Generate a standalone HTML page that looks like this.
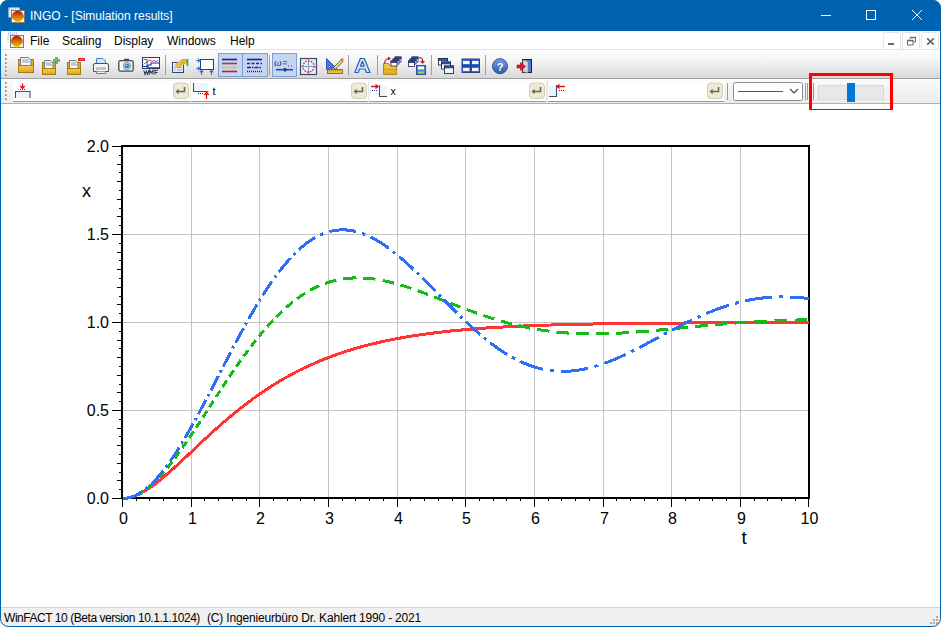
<!DOCTYPE html>
<html><head><meta charset="utf-8">
<style>
*{margin:0;padding:0;box-sizing:border-box}
html,body{width:941px;height:627px;overflow:hidden;background:#fff}
body{position:relative;font-family:"Liberation Sans",sans-serif}
.a{position:absolute}
.win{position:absolute;left:0;top:0;width:941px;height:627px;overflow:hidden;background:#fff}
.title{position:absolute;left:0;top:0;width:941px;height:31px;background:#0063b1}
.tt{position:absolute;color:#fff;font-size:12px;white-space:nowrap;line-height:14px}
.menu{position:absolute;top:31px;left:0;width:941px;height:19px;background:#fff}
.mi{position:absolute;top:34px;font-size:12px;line-height:14px;color:#000;white-space:nowrap}
.tb1{position:absolute;left:0;top:49px;width:941px;height:30px;background:linear-gradient(#fdfdfd,#f6f6f6 35%,#d8d8d8);border-top:1px solid #e4e4e4;border-bottom:1px solid #a0a0a0}
.tb2{position:absolute;left:0;top:79px;width:941px;height:25px;background:linear-gradient(#fafafa,#ececec);border-top:1px solid #fcfcfc;border-bottom:1px solid #b0b0b0}
.fld{position:absolute;top:81px;height:21px;background:#fff;border-bottom:1px solid #9a9a9a}
.ent{position:absolute;top:83px;width:16px;height:16px;border-radius:4px;background:#ebe6d2;border:1px solid #d8d2b8}
.sep{position:absolute;width:1px;background:#a8a8a8}
.status{position:absolute;left:0;top:607px;width:941px;height:20px;background:#f0f0f0;border-top:1px solid #d4d4d4}
.st{position:absolute;left:4px;top:611px;font-size:12px;line-height:14px;color:#000;white-space:nowrap;letter-spacing:-0.28px}
</style></head><body>
<div class="win">
<div class="title"></div>
<div class="tt" style="left:30px;top:8.6px">INGO - [Simulation results]</div>
<div class="menu"></div>
<div class="mi" style="left:30px">File</div>
<div class="mi" style="left:62px">Scaling</div>
<div class="mi" style="left:114px">Display</div>
<div class="mi" style="left:167px">Windows</div>
<div class="mi" style="left:230px">Help</div>
<div class="tb1"></div>
<div class="tb2"></div>
<div class="fld" style="left:13px;width:177px"></div>
<div class="fld" style="left:191px;width:177px"></div>
<div class="fld" style="left:369px;width:177px"></div>
<div class="fld" style="left:548px;width:176px"></div>
<div class="ent" style="left:173px"></div>
<div class="ent" style="left:351px"></div>
<div class="ent" style="left:529px"></div>
<div class="ent" style="left:707px"></div>
<div class="status"></div>
<svg class="a" style="left:920px;top:606px" width="21" height="21"><g fill="#acacac"><rect x="16" y="10" width="2" height="2"/><rect x="13" y="13" width="2" height="2"/><rect x="16" y="13" width="2" height="2"/><rect x="10" y="16" width="2" height="2"/><rect x="13" y="16" width="2" height="2"/><rect x="16" y="16" width="2" height="2"/></g></svg>
<div class="st" style="letter-spacing:-0.45px">WinFACT 10 (Beta version 10.1.1.1024)</div><div class="st" style="left:207px;letter-spacing:-0.18px">(C) Ingenieurbüro Dr. Kahlert 1990 - 2021</div>
<svg width="941" height="520" viewBox="0 104 941 520" style="position:absolute;left:0;top:104px">
<g shape-rendering="crispEdges">
<path d="M191.5,147V497 M259.5,147V497 M328.5,147V497 M397.5,147V497 M465.5,147V497 M534.5,147V497 M603.5,147V497 M671.5,147V497 M740.5,147V497 M123,410.5H808 M123,322.5H808 M123,234.5H808" stroke="#c4c4c4" stroke-width="1" fill="none"/>
<path d="M122.5,499V507 M191.5,499V507 M259.5,499V507 M328.5,499V507 M397.5,499V507 M465.5,499V507 M534.5,499V507 M603.5,499V507 M671.5,499V507 M740.5,499V507 M808.5,499V507 M136.5,499V501 M149.5,499V501 M163.5,499V501 M177.5,499V501 M204.5,499V501 M218.5,499V501 M232.5,499V501 M246.5,499V501 M273.5,499V501 M287.5,499V501 M300.5,499V501 M314.5,499V501 M342.5,499V501 M355.5,499V501 M369.5,499V501 M383.5,499V501 M410.5,499V501 M424.5,499V501 M438.5,499V501 M452.5,499V501 M479.5,499V501 M493.5,499V501 M506.5,499V501 M520.5,499V501 M548.5,499V501 M561.5,499V501 M575.5,499V501 M589.5,499V501 M616.5,499V501 M630.5,499V501 M644.5,499V501 M657.5,499V501 M685.5,499V501 M699.5,499V501 M712.5,499V501 M726.5,499V501 M754.5,499V501 M767.5,499V501 M781.5,499V501 M795.5,499V501 M112,498.5H121 M119,489.5H121 M117,480.5H121 M119,472.5H121 M117,463.5H121 M119,454.5H121 M117,445.5H121 M119,436.5H121 M117,428.5H121 M119,419.5H121 M112,410.5H121 M119,401.5H121 M117,392.5H121 M119,384.5H121 M117,375.5H121 M119,366.5H121 M117,357.5H121 M119,348.5H121 M117,340.5H121 M119,331.5H121 M112,322.5H121 M119,313.5H121 M117,304.5H121 M119,296.5H121 M117,287.5H121 M119,278.5H121 M117,269.5H121 M119,260.5H121 M117,252.5H121 M119,243.5H121 M112,234.5H121 M119,225.5H121 M117,216.5H121 M119,208.5H121 M117,199.5H121 M119,190.5H121 M117,181.5H121 M119,172.5H121 M117,164.5H121 M119,155.5H121 M112,146.5H121" stroke="#000" stroke-width="1" fill="none"/>
<rect x="122" y="146" width="687" height="352" fill="none" stroke="#000" stroke-width="2"/>
</g>
<path d="M122.5,498.5 123.9,498.5 125.2,498.4 126.6,498.2 128.0,498.0 129.4,497.7 130.7,497.3 132.1,496.9 133.5,496.5 134.9,496.0 136.2,495.4 137.6,494.8 139.0,494.2 140.3,493.5 141.7,492.8 143.1,492.0 144.5,491.2 145.8,490.4 147.2,489.5 148.6,488.6 150.0,487.7 151.3,486.7 152.7,485.7 154.1,484.7 155.5,483.7 156.8,482.6 158.2,481.5 159.6,480.4 160.9,479.3 162.3,478.2 163.7,477.0 165.1,475.9 166.4,474.7 167.8,473.5 169.2,472.3 170.6,471.1 171.9,469.8 173.3,468.6 174.7,467.4 176.0,466.1 177.4,464.8 178.8,463.6 180.2,462.3 181.5,461.0 182.9,459.7 184.3,458.5 185.7,457.2 187.0,455.9 188.4,454.6 189.8,453.3 191.2,452.0 192.5,450.7 193.9,449.4 195.3,448.1 196.6,446.8 198.0,445.5 199.4,444.2 200.8,443.0 202.1,441.7 203.5,440.4 204.9,439.1 206.3,437.9 207.6,436.6 209.0,435.3 210.4,434.1 211.7,432.8 213.1,431.6 214.5,430.3 215.9,429.1 217.2,427.9 218.6,426.7 220.0,425.5 221.4,424.2 222.7,423.0 224.1,421.9 225.5,420.7 226.8,419.5 228.2,418.3 229.6,417.2 231.0,416.0 232.3,414.9 233.7,413.8 235.1,412.6 236.5,411.5 237.8,410.4 239.2,409.3 240.6,408.2 242.0,407.1 243.3,406.1 244.7,405.0 246.1,404.0 247.4,402.9 248.8,401.9 250.2,400.9 251.6,399.8 252.9,398.8 254.3,397.8 255.7,396.9 257.1,395.9 258.4,394.9 259.8,394.0 261.2,393.0 262.5,392.1 263.9,391.1 265.3,390.2 266.7,389.3 268.0,388.4 269.4,387.5 270.8,386.6 272.2,385.8 273.5,384.9 274.9,384.1 276.3,383.2 277.6,382.4 279.0,381.5 280.4,380.7 281.8,379.9 283.1,379.1 284.5,378.3 285.9,377.6 287.3,376.8 288.6,376.0 290.0,375.3 291.4,374.5 292.8,373.8 294.1,373.1 295.5,372.3 296.9,371.6 298.2,370.9 299.6,370.2 301.0,369.6 302.4,368.9 303.7,368.2 305.1,367.6 306.5,366.9 307.9,366.3 309.2,365.6 310.6,365.0 312.0,364.4 313.3,363.8 314.7,363.2 316.1,362.6 317.5,362.0 318.8,361.4 320.2,360.8 321.6,360.3 323.0,359.7 324.3,359.2 325.7,358.6 327.1,358.1 328.5,357.6 329.8,357.0 331.2,356.5 332.6,356.0 333.9,355.5 335.3,355.0 336.7,354.5 338.1,354.0 339.4,353.6 340.8,353.1 342.2,352.6 343.6,352.2 344.9,351.7 346.3,351.3 347.7,350.8 349.0,350.4 350.4,350.0 351.8,349.6 353.2,349.2 354.5,348.7 355.9,348.3 357.3,347.9 358.7,347.6 360.0,347.2 361.4,346.8 362.8,346.4 364.1,346.0 365.5,345.7 366.9,345.3 368.3,345.0 369.6,344.6 371.0,344.3 372.4,343.9 373.8,343.6 375.1,343.3 376.5,343.0 377.9,342.6 379.3,342.3 380.6,342.0 382.0,341.7 383.4,341.4 384.7,341.1 386.1,340.8 387.5,340.5 388.9,340.2 390.2,340.0 391.6,339.7 393.0,339.4 394.4,339.1 395.7,338.9 397.1,338.6 398.5,338.4 399.8,338.1 401.2,337.9 402.6,337.6 404.0,337.4 405.3,337.1 406.7,336.9 408.1,336.7 409.5,336.4 410.8,336.2 412.2,336.0 413.6,335.8 414.9,335.6 416.3,335.4 417.7,335.2 419.1,335.0 420.4,334.8 421.8,334.6 423.2,334.4 424.6,334.2 425.9,334.0 427.3,333.8 428.7,333.6 430.1,333.4 431.4,333.3 432.8,333.1 434.2,332.9 435.5,332.7 436.9,332.6 438.3,332.4 439.7,332.2 441.0,332.1 442.4,331.9 443.8,331.8 445.2,331.6 446.5,331.5 447.9,331.3 449.3,331.2 450.6,331.0 452.0,330.9 453.4,330.8 454.8,330.6 456.1,330.5 457.5,330.4 458.9,330.2 460.3,330.1 461.6,330.0 463.0,329.9 464.4,329.7 465.8,329.6 467.1,329.5 468.5,329.4 469.9,329.3 471.2,329.2 472.6,329.0 474.0,328.9 475.4,328.8 476.7,328.7 478.1,328.6 479.5,328.5 480.9,328.4 482.2,328.3 483.6,328.2 485.0,328.1 486.3,328.0 487.7,327.9 489.1,327.9 490.5,327.8 491.8,327.7 493.2,327.6 494.6,327.5 496.0,327.4 497.3,327.3 498.7,327.3 500.1,327.2 501.4,327.1 502.8,327.0 504.2,326.9 505.6,326.9 506.9,326.8 508.3,326.7 509.7,326.7 511.1,326.6 512.4,326.5 513.8,326.4 515.2,326.4 516.6,326.3 517.9,326.2 519.3,326.2 520.7,326.1 522.0,326.1 523.4,326.0 524.8,325.9 526.2,325.9 527.5,325.8 528.9,325.8 530.3,325.7 531.7,325.7 533.0,325.6 534.4,325.6 535.8,325.5 537.1,325.5 538.5,325.4 539.9,325.4 541.3,325.3 542.6,325.3 544.0,325.2 545.4,325.2 546.8,325.1 548.1,325.1 549.5,325.0 550.9,325.0 552.2,324.9 553.6,324.9 555.0,324.9 556.4,324.8 557.7,324.8 559.1,324.7 560.5,324.7 561.9,324.7 563.2,324.6 564.6,324.6 566.0,324.6 567.4,324.5 568.7,324.5 570.1,324.5 571.5,324.4 572.8,324.4 574.2,324.4 575.6,324.3 577.0,324.3 578.3,324.3 579.7,324.2 581.1,324.2 582.5,324.2 583.8,324.1 585.2,324.1 586.6,324.1 587.9,324.1 589.3,324.0 590.7,324.0 592.1,324.0 593.4,324.0 594.8,323.9 596.2,323.9 597.6,323.9 598.9,323.9 600.3,323.8 601.7,323.8 603.1,323.8 604.4,323.8 605.8,323.7 607.2,323.7 608.5,323.7 609.9,323.7 611.3,323.7 612.7,323.6 614.0,323.6 615.4,323.6 616.8,323.6 618.2,323.6 619.5,323.5 620.9,323.5 622.3,323.5 623.6,323.5 625.0,323.5 626.4,323.5 627.8,323.4 629.1,323.4 630.5,323.4 631.9,323.4 633.3,323.4 634.6,323.4 636.0,323.3 637.4,323.3 638.7,323.3 640.1,323.3 641.5,323.3 642.9,323.3 644.2,323.3 645.6,323.2 647.0,323.2 648.4,323.2 649.7,323.2 651.1,323.2 652.5,323.2 653.9,323.2 655.2,323.2 656.6,323.1 658.0,323.1 659.3,323.1 660.7,323.1 662.1,323.1 663.5,323.1 664.8,323.1 666.2,323.1 667.6,323.1 669.0,323.1 670.3,323.0 671.7,323.0 673.1,323.0 674.4,323.0 675.8,323.0 677.2,323.0 678.6,323.0 679.9,323.0 681.3,323.0 682.7,323.0 684.1,323.0 685.4,322.9 686.8,322.9 688.2,322.9 689.5,322.9 690.9,322.9 692.3,322.9 693.7,322.9 695.0,322.9 696.4,322.9 697.8,322.9 699.2,322.9 700.5,322.9 701.9,322.9 703.3,322.9 704.7,322.8 706.0,322.8 707.4,322.8 708.8,322.8 710.1,322.8 711.5,322.8 712.9,322.8 714.3,322.8 715.6,322.8 717.0,322.8 718.4,322.8 719.8,322.8 721.1,322.8 722.5,322.8 723.9,322.8 725.2,322.8 726.6,322.8 728.0,322.8 729.4,322.8 730.7,322.7 732.1,322.7 733.5,322.7 734.9,322.7 736.2,322.7 737.6,322.7 739.0,322.7 740.4,322.7 741.7,322.7 743.1,322.7 744.5,322.7 745.8,322.7 747.2,322.7 748.6,322.7 750.0,322.7 751.3,322.7 752.7,322.7 754.1,322.7 755.5,322.7 756.8,322.7 758.2,322.7 759.6,322.7 760.9,322.7 762.3,322.7 763.7,322.7 765.1,322.7 766.4,322.7 767.8,322.7 769.2,322.6 770.6,322.6 771.9,322.6 773.3,322.6 774.7,322.6 776.0,322.6 777.4,322.6 778.8,322.6 780.2,322.6 781.5,322.6 782.9,322.6 784.3,322.6 785.7,322.6 787.0,322.6 788.4,322.6 789.8,322.6 791.2,322.6 792.5,322.6 793.9,322.6 795.3,322.6 796.6,322.6 798.0,322.6 799.4,322.6 800.8,322.6 802.1,322.6 803.5,322.6 804.9,322.6 806.3,322.6 807.6,322.6 809.0,322.6" stroke="#ff3535" stroke-width="3" fill="none" stroke-linejoin="round" shape-rendering="crispEdges"/>
<path d="M122.5,498.5 122.8,498.5 123.0,498.5 123.2,498.5 123.5,498.5 123.8,498.5 124.0,498.5 124.2,498.4 124.5,498.4 124.8,498.4 125.0,498.4 125.2,498.4 125.5,498.3 125.8,498.3 126.0,498.3 126.2,498.2 126.5,498.2 126.8,498.2 127.0,498.1 127.2,498.1 127.5,498.0 127.8,498.0 128.0,497.9 128.2,497.9 128.5,497.8 128.8,497.8 129.0,497.7 129.2,497.7 129.5,497.6 M135.8,495.4 136.0,495.3 136.2,495.2 136.5,495.0 136.8,494.9 137.0,494.8 137.2,494.7 137.5,494.5 137.8,494.4 138.0,494.3 138.2,494.2 138.5,494.0 138.8,493.9 139.0,493.7 139.2,493.6 139.5,493.5 139.8,493.3 140.0,493.2 140.2,493.0 140.5,492.9 140.8,492.7 141.0,492.6 141.2,492.4 141.5,492.3 141.8,492.1 142.0,492.0 142.2,491.8 142.5,491.6 142.8,491.5 143.0,491.3 143.2,491.1 143.5,491.0 143.8,490.8 144.0,490.6 144.2,490.4 M148.6,487.1 148.8,486.9 149.1,486.7 149.3,486.5 149.6,486.3 149.8,486.1 150.1,485.9 150.3,485.7 150.6,485.5 150.8,485.2 151.1,485.0 151.3,484.8 151.6,484.6 151.8,484.3 152.1,484.1 152.3,483.9 152.6,483.7 152.8,483.4 153.1,483.2 153.3,483.0 153.6,482.7 153.8,482.5 154.1,482.3 154.3,482.0 154.6,481.8 154.8,481.5 155.0,481.4 M158.6,477.8 158.8,477.5 159.1,477.2 159.3,477.0 159.6,476.7 159.8,476.4 160.1,476.2 160.3,475.9 160.6,475.6 160.8,475.3 161.1,475.1 161.3,474.8 161.6,474.5 161.8,474.2 162.1,474.0 162.3,473.7 162.6,473.4 162.8,473.1 163.1,472.8 163.3,472.5 163.6,472.3 163.8,472.0 164.1,471.7 M167.1,468.1 167.4,467.8 167.6,467.5 167.9,467.1 168.1,466.8 168.4,466.5 168.6,466.2 168.9,465.9 169.1,465.6 169.4,465.3 169.6,465.0 169.9,464.7 170.1,464.4 170.4,464.0 170.6,463.7 170.9,463.4 171.1,463.1 171.4,462.8 171.6,462.4 171.9,462.1 172.1,461.8 M174.9,458.1 175.2,457.8 175.4,457.5 175.7,457.1 175.9,456.8 176.2,456.5 176.4,456.1 176.7,455.8 176.9,455.4 177.2,455.1 177.4,454.8 177.7,454.4 177.9,454.1 178.2,453.7 178.4,453.4 178.7,453.1 178.9,452.7 179.2,452.4 179.4,452.0 179.6,451.9 M182.3,448.0 182.6,447.6 182.8,447.3 183.1,446.9 183.3,446.6 183.6,446.2 183.8,445.9 184.1,445.5 184.3,445.2 184.6,444.8 184.8,444.4 185.1,444.1 185.3,443.7 185.6,443.4 185.8,443.0 186.1,442.6 186.3,442.3 186.6,441.9 186.7,441.7 M189.3,437.9 189.6,437.5 189.8,437.1 190.1,436.8 190.3,436.4 190.6,436.0 190.8,435.7 191.1,435.3 191.3,434.9 191.6,434.5 191.8,434.2 192.1,433.8 192.3,433.4 192.6,433.0 192.8,432.7 193.1,432.3 193.3,431.9 193.6,431.5 M196.1,427.8 196.3,427.4 196.6,427.0 196.8,426.6 197.1,426.3 197.3,425.9 197.6,425.5 197.8,425.1 198.1,424.7 198.3,424.4 198.6,424.0 198.8,423.6 199.1,423.2 199.3,422.8 199.6,422.4 199.8,422.1 200.1,421.7 200.2,421.4 M202.8,417.6 203.0,417.2 203.2,416.8 203.5,416.4 203.8,416.0 204.0,415.6 204.2,415.2 204.5,414.9 204.8,414.5 205.0,414.1 205.2,413.7 205.5,413.3 205.8,412.9 206.0,412.5 206.2,412.2 206.5,411.8 206.8,411.4 206.9,411.2 M209.4,407.3 209.6,406.9 209.9,406.6 210.1,406.2 210.4,405.8 210.6,405.4 210.9,405.0 211.1,404.6 211.4,404.2 211.6,403.9 211.9,403.5 212.1,403.1 212.4,402.7 212.6,402.3 212.9,401.9 213.1,401.5 213.4,401.1 213.5,401.0 M216.0,397.1 216.2,396.7 216.5,396.3 216.8,396.0 217.0,395.6 217.2,395.2 217.5,394.8 217.8,394.4 218.0,394.0 218.2,393.6 218.5,393.3 218.8,392.9 219.0,392.5 219.2,392.1 219.5,391.7 219.8,391.4 220.0,391.0 220.1,390.8 M222.6,387.0 222.9,386.6 223.1,386.2 223.4,385.8 223.6,385.5 223.9,385.1 224.1,384.7 224.4,384.3 224.6,383.9 224.9,383.6 225.1,383.2 225.4,382.8 225.6,382.4 225.9,382.1 226.1,381.7 226.4,381.3 226.6,380.9 226.9,380.6 M229.4,376.7 229.7,376.4 229.9,376.0 230.2,375.6 230.4,375.3 230.7,374.9 230.9,374.5 231.2,374.1 231.4,373.8 231.7,373.4 231.9,373.0 232.2,372.7 232.4,372.3 232.7,371.9 232.9,371.6 233.2,371.2 233.4,370.8 233.7,370.5 233.8,370.4 M236.4,366.6 236.6,366.2 236.9,365.9 237.1,365.5 237.4,365.2 237.6,364.8 237.9,364.4 238.1,364.1 238.4,363.7 238.6,363.4 238.9,363.0 239.1,362.7 239.4,362.3 239.6,362.0 239.9,361.6 240.1,361.2 240.4,360.9 240.6,360.5 240.8,360.3 M243.5,356.5 243.8,356.2 244.0,355.8 244.2,355.5 244.5,355.2 244.8,354.8 245.0,354.5 245.2,354.1 245.5,353.8 245.8,353.5 246.0,353.1 246.2,352.8 246.5,352.4 246.8,352.1 247.0,351.8 247.2,351.4 247.5,351.1 247.8,350.8 248.0,350.4 248.1,350.2 M250.9,346.5 251.2,346.2 251.4,345.9 251.7,345.5 251.9,345.2 252.2,344.9 252.4,344.6 252.7,344.2 252.9,343.9 253.2,343.6 253.4,343.3 253.7,343.0 253.9,342.6 254.2,342.3 254.4,342.0 254.7,341.7 254.9,341.4 255.2,341.1 255.4,340.7 255.7,340.4 255.8,340.3 M258.8,336.5 259.1,336.2 259.3,335.9 259.6,335.6 259.8,335.3 260.1,335.0 260.3,334.7 260.6,334.4 260.8,334.1 261.1,333.8 261.3,333.5 261.6,333.2 261.8,332.9 262.1,332.6 262.3,332.3 262.6,332.0 262.8,331.7 263.1,331.4 263.3,331.1 263.6,330.8 263.8,330.6 263.9,330.4 M267.1,326.8 267.4,326.5 267.6,326.2 267.9,325.9 268.1,325.6 268.4,325.4 268.6,325.1 268.9,324.8 269.1,324.5 269.4,324.3 269.6,324.0 269.9,323.7 270.1,323.4 270.4,323.2 270.6,322.9 270.9,322.6 271.1,322.3 271.4,322.1 271.6,321.8 271.9,321.5 272.1,321.3 272.4,321.0 272.6,320.7 272.7,320.7 M276.2,317.1 276.4,316.8 276.7,316.5 276.9,316.3 277.2,316.0 277.4,315.8 277.7,315.5 277.9,315.3 278.2,315.1 278.4,314.8 278.7,314.6 278.9,314.3 279.2,314.1 279.4,313.8 279.7,313.6 279.9,313.3 280.2,313.1 280.4,312.9 280.7,312.6 280.9,312.4 281.2,312.2 281.4,311.9 281.7,311.7 281.9,311.4 282.2,311.2 282.2,311.2 M286.1,307.7 286.3,307.5 286.6,307.3 286.8,307.0 287.1,306.8 287.3,306.6 287.6,306.4 287.8,306.2 288.1,306.0 288.3,305.7 288.6,305.5 288.8,305.3 289.1,305.1 289.3,304.9 289.6,304.7 289.8,304.5 290.1,304.3 290.3,304.1 290.6,303.9 290.8,303.7 291.1,303.5 291.3,303.2 291.6,303.0 291.8,302.8 292.1,302.6 292.3,302.4 292.6,302.2 292.8,302.0 292.9,302.0 M297.2,298.7 297.4,298.5 297.7,298.3 297.9,298.2 298.2,298.0 298.4,297.8 298.7,297.6 298.9,297.5 299.2,297.3 299.4,297.1 299.7,296.9 299.9,296.8 300.2,296.6 300.4,296.4 300.7,296.2 300.9,296.1 301.2,295.9 301.4,295.7 301.7,295.6 301.9,295.4 302.2,295.2 302.4,295.1 302.7,294.9 302.9,294.7 303.2,294.6 303.4,294.4 303.7,294.2 303.9,294.1 304.2,293.9 304.4,293.8 304.7,293.6 304.9,293.4 305.0,293.4 M310.1,290.4 310.3,290.3 310.6,290.1 310.8,290.0 311.1,289.9 311.3,289.7 311.6,289.6 311.8,289.5 312.1,289.3 312.3,289.2 312.6,289.1 312.8,288.9 313.1,288.8 313.3,288.7 313.6,288.5 313.8,288.4 314.1,288.3 314.3,288.2 314.6,288.0 314.8,287.9 315.1,287.8 315.3,287.7 315.6,287.5 315.8,287.4 316.1,287.3 316.3,287.2 316.6,287.1 316.8,286.9 317.1,286.8 317.3,286.7 317.6,286.6 317.8,286.5 318.1,286.4 318.3,286.3 318.6,286.1 318.8,286.0 319.1,285.9 319.2,285.8 M325.2,283.4 325.5,283.4 325.8,283.3 326.0,283.2 326.2,283.1 326.5,283.0 326.8,282.9 327.0,282.8 327.2,282.7 327.5,282.7 327.8,282.6 328.0,282.5 328.2,282.4 328.5,282.3 328.8,282.3 329.0,282.2 329.2,282.1 329.5,282.0 329.8,281.9 330.0,281.9 330.2,281.8 330.5,281.7 330.8,281.6 331.0,281.6 331.2,281.5 331.5,281.4 331.8,281.4 332.0,281.3 332.2,281.2 332.5,281.1 332.8,281.1 333.0,281.0 333.2,280.9 333.5,280.9 333.8,280.8 334.0,280.8 334.2,280.7 334.5,280.6 334.8,280.6 335.0,280.5 335.2,280.4 335.5,280.4 335.8,280.3 336.0,280.3 336.2,280.2 M343.3,278.9 343.6,278.8 343.8,278.8 344.1,278.8 344.3,278.7 344.6,278.7 344.8,278.7 345.1,278.6 345.3,278.6 345.6,278.6 345.8,278.5 346.1,278.5 346.3,278.5 346.6,278.5 346.8,278.4 347.1,278.4 347.3,278.4 347.6,278.3 347.8,278.3 348.1,278.3 348.3,278.3 348.6,278.2 348.8,278.2 349.1,278.2 349.3,278.2 349.6,278.2 349.8,278.1 350.1,278.1 350.3,278.1 350.6,278.1 350.8,278.1 351.1,278.0 351.3,278.0 351.6,278.0 351.8,278.0 352.1,278.0 352.3,278.0 352.6,278.0 352.8,277.9 353.1,277.9 353.3,277.9 353.6,277.9 353.8,277.9 354.1,277.9 354.3,277.9 354.6,277.9 354.8,277.9 355.1,277.9 355.3,277.9 355.6,277.9 355.6,277.8 M363.1,278.0 363.4,278.0 363.6,278.0 363.9,278.0 364.1,278.0 364.4,278.0 364.6,278.0 364.9,278.1 365.1,278.1 365.4,278.1 365.6,278.1 365.9,278.1 366.1,278.1 366.4,278.2 366.6,278.2 366.9,278.2 367.1,278.2 367.4,278.2 367.6,278.3 367.9,278.3 368.1,278.3 368.4,278.3 368.6,278.4 368.9,278.4 369.1,278.4 369.4,278.4 369.6,278.5 369.9,278.5 370.1,278.5 370.4,278.5 370.6,278.6 370.9,278.6 371.1,278.6 371.4,278.7 371.6,278.7 371.9,278.7 372.1,278.7 372.4,278.8 372.6,278.8 372.9,278.8 373.1,278.9 373.4,278.9 373.6,278.9 373.9,279.0 374.1,279.0 374.4,279.0 374.6,279.1 374.9,279.1 375.1,279.1 375.4,279.2 375.4,279.2 M382.6,280.4 382.8,280.5 383.1,280.5 383.3,280.6 383.6,280.6 383.8,280.7 384.1,280.7 384.3,280.8 384.6,280.9 384.8,280.9 385.1,281.0 385.3,281.0 385.6,281.1 385.8,281.1 386.1,281.2 386.3,281.2 386.6,281.3 386.8,281.3 387.1,281.4 387.3,281.5 387.6,281.5 387.8,281.6 388.1,281.6 388.3,281.7 388.6,281.8 388.8,281.8 389.1,281.9 389.3,281.9 389.6,282.0 389.8,282.1 390.1,282.1 390.3,282.2 390.6,282.2 390.8,282.3 391.1,282.4 391.3,282.4 391.6,282.5 391.8,282.6 392.1,282.6 392.3,282.7 392.6,282.7 392.8,282.8 393.1,282.9 393.3,282.9 393.6,283.0 393.8,283.1 394.0,283.1 M400.6,285.0 400.9,285.1 401.1,285.2 401.4,285.2 401.6,285.3 401.9,285.4 402.1,285.5 402.4,285.5 402.6,285.6 402.9,285.7 403.1,285.8 403.4,285.8 403.6,285.9 403.9,286.0 404.1,286.1 404.4,286.2 404.6,286.2 404.9,286.3 405.1,286.4 405.4,286.5 405.6,286.6 405.9,286.6 406.1,286.7 406.4,286.8 406.6,286.9 406.9,287.0 407.1,287.0 407.4,287.1 407.6,287.2 407.9,287.3 408.1,287.4 408.4,287.4 408.6,287.5 408.9,287.6 409.1,287.7 409.4,287.8 409.6,287.9 409.9,287.9 410.1,288.0 410.4,288.1 410.6,288.2 410.9,288.3 411.1,288.4 411.4,288.5 M417.7,290.7 417.9,290.8 418.2,290.8 418.4,290.9 418.7,291.0 418.9,291.1 419.2,291.2 419.4,291.3 419.7,291.4 419.9,291.5 420.2,291.6 420.4,291.7 420.7,291.8 420.9,291.8 421.2,291.9 421.4,292.0 421.7,292.1 421.9,292.2 422.2,292.3 422.4,292.4 422.7,292.5 422.9,292.6 423.2,292.7 423.4,292.8 423.7,292.9 423.9,293.0 424.2,293.0 424.4,293.1 424.7,293.2 424.9,293.3 425.2,293.4 425.4,293.5 425.7,293.6 425.9,293.7 426.2,293.8 426.4,293.9 426.7,294.0 426.9,294.1 427.2,294.2 427.4,294.3 427.7,294.4 427.9,294.5 428.0,294.5 M434.1,296.8 434.4,296.9 434.6,297.0 434.9,297.1 435.1,297.2 435.4,297.3 435.6,297.4 435.9,297.5 436.1,297.6 436.4,297.7 436.6,297.8 436.9,297.9 437.1,298.0 437.4,298.1 437.6,298.2 437.9,298.3 438.1,298.4 438.4,298.5 438.6,298.6 438.9,298.7 439.1,298.8 439.4,298.9 439.6,299.0 439.9,299.1 440.1,299.2 440.4,299.3 440.6,299.4 440.9,299.5 441.1,299.6 441.4,299.7 441.6,299.8 441.9,299.9 442.1,300.0 442.4,300.1 442.6,300.2 442.9,300.3 443.1,300.4 443.4,300.5 443.6,300.5 443.9,300.6 444.1,300.7 444.2,300.8 M450.3,303.2 450.6,303.3 450.8,303.4 451.1,303.5 451.3,303.6 451.6,303.7 451.8,303.8 452.1,303.9 452.3,304.0 452.6,304.0 452.8,304.1 453.1,304.2 453.3,304.3 453.6,304.4 453.8,304.5 454.1,304.6 454.3,304.7 454.6,304.8 454.8,304.9 455.1,305.0 455.3,305.1 455.6,305.2 455.8,305.3 456.1,305.4 456.3,305.5 456.6,305.6 456.8,305.7 457.1,305.8 457.3,305.9 457.6,306.0 457.8,306.1 458.1,306.2 458.3,306.3 458.6,306.4 458.8,306.5 459.1,306.6 459.3,306.7 459.6,306.8 459.8,306.9 460.1,307.0 460.3,307.0 460.5,307.1 M466.6,309.4 466.9,309.5 467.1,309.6 467.4,309.7 467.6,309.8 467.9,309.9 468.1,310.0 468.4,310.1 468.6,310.2 468.9,310.3 469.1,310.4 469.4,310.5 469.6,310.6 469.9,310.6 470.1,310.7 470.4,310.8 470.6,310.9 470.9,311.0 471.1,311.1 471.4,311.2 471.6,311.3 471.9,311.4 472.1,311.5 472.4,311.6 472.6,311.6 472.9,311.7 473.1,311.8 473.4,311.9 473.6,312.0 473.9,312.1 474.1,312.2 474.4,312.3 474.6,312.4 474.9,312.5 475.1,312.6 475.4,312.6 475.6,312.7 475.9,312.8 476.1,312.9 476.4,313.0 476.6,313.1 476.9,313.2 477.0,313.2 M483.3,315.4 483.6,315.5 483.8,315.6 484.1,315.7 484.3,315.8 484.6,315.8 484.8,315.9 485.1,316.0 485.3,316.1 485.6,316.2 485.8,316.3 486.1,316.3 486.3,316.4 486.6,316.5 486.8,316.6 487.1,316.7 487.3,316.8 487.6,316.8 487.8,316.9 488.1,317.0 488.3,317.1 488.6,317.2 488.8,317.2 489.1,317.3 489.3,317.4 489.6,317.5 489.8,317.6 490.1,317.6 490.3,317.7 490.6,317.8 490.8,317.9 491.1,318.0 491.3,318.1 491.6,318.1 491.8,318.2 492.1,318.3 492.3,318.4 492.6,318.4 492.8,318.5 493.1,318.6 493.3,318.7 493.6,318.8 493.8,318.8 494.0,318.9 M500.6,320.9 500.8,320.9 501.1,321.0 501.3,321.1 501.6,321.2 501.8,321.2 502.1,321.3 502.3,321.4 502.6,321.5 502.8,321.5 503.1,321.6 503.3,321.7 503.6,321.7 503.8,321.8 504.1,321.9 504.3,321.9 504.6,322.0 504.8,322.1 505.1,322.2 505.3,322.2 505.6,322.3 505.8,322.4 506.1,322.4 506.3,322.5 506.6,322.6 506.8,322.6 507.1,322.7 507.3,322.8 507.6,322.8 507.8,322.9 508.1,323.0 508.3,323.0 508.6,323.1 508.8,323.2 509.1,323.2 509.3,323.3 509.6,323.4 509.8,323.4 510.1,323.5 510.3,323.6 510.6,323.6 510.8,323.7 511.1,323.8 511.3,323.8 511.6,323.9 511.7,323.9 M518.5,325.6 518.8,325.7 519.0,325.7 519.2,325.8 519.5,325.8 519.8,325.9 520.0,325.9 520.2,326.0 520.5,326.1 520.8,326.1 521.0,326.2 521.2,326.2 521.5,326.3 521.8,326.3 522.0,326.4 522.2,326.5 522.5,326.5 522.8,326.6 523.0,326.6 523.2,326.7 523.5,326.7 523.8,326.8 524.0,326.8 524.2,326.9 524.5,326.9 524.8,327.0 525.0,327.0 525.2,327.1 525.5,327.2 525.8,327.2 526.0,327.3 526.2,327.3 526.5,327.4 526.8,327.4 527.0,327.5 527.2,327.5 527.5,327.6 527.8,327.6 528.0,327.7 528.2,327.7 528.5,327.8 528.8,327.8 529.0,327.9 529.2,327.9 529.5,328.0 529.8,328.0 530.0,328.1 530.1,328.1 M537.2,329.4 537.5,329.4 537.8,329.5 538.0,329.5 538.2,329.5 538.5,329.6 538.8,329.6 539.0,329.7 539.2,329.7 539.5,329.8 539.8,329.8 540.0,329.8 540.2,329.9 540.5,329.9 540.8,330.0 541.0,330.0 541.2,330.0 541.5,330.1 541.8,330.1 542.0,330.1 542.2,330.2 542.5,330.2 542.8,330.3 543.0,330.3 543.2,330.3 543.5,330.4 543.8,330.4 544.0,330.4 544.2,330.5 544.5,330.5 544.8,330.6 545.0,330.6 545.2,330.6 545.5,330.7 545.8,330.7 546.0,330.7 546.2,330.8 546.5,330.8 546.8,330.8 547.0,330.9 547.2,330.9 547.5,330.9 547.8,331.0 548.0,331.0 548.2,331.0 548.5,331.1 548.8,331.1 549.0,331.1 549.2,331.2 549.3,331.2 M556.6,332.0 556.9,332.1 557.1,332.1 557.4,332.1 557.6,332.1 557.9,332.2 558.1,332.2 558.4,332.2 558.6,332.2 558.9,332.3 559.1,332.3 559.4,332.3 559.6,332.3 559.9,332.3 560.1,332.4 560.4,332.4 560.6,332.4 560.9,332.4 561.1,332.5 561.4,332.5 561.6,332.5 561.9,332.5 562.1,332.6 562.4,332.6 562.6,332.6 562.9,332.6 563.1,332.6 563.4,332.7 563.6,332.7 563.9,332.7 564.1,332.7 564.4,332.7 564.6,332.8 564.9,332.8 565.1,332.8 565.4,332.8 565.6,332.8 565.9,332.9 566.1,332.9 566.4,332.9 566.6,332.9 566.9,332.9 567.1,332.9 567.4,333.0 567.6,333.0 567.9,333.0 568.1,333.0 568.4,333.0 568.6,333.1 568.9,333.1 569.0,333.1 M576.4,333.5 576.7,333.5 576.9,333.5 577.2,333.5 577.4,333.5 577.7,333.5 577.9,333.5 578.2,333.6 578.4,333.6 578.7,333.6 578.9,333.6 579.2,333.6 579.4,333.6 579.7,333.6 579.9,333.6 580.2,333.6 580.4,333.6 580.7,333.6 580.9,333.7 581.2,333.7 581.4,333.7 581.7,333.7 581.9,333.7 582.2,333.7 582.4,333.7 582.7,333.7 582.9,333.7 583.2,333.7 583.4,333.7 583.7,333.7 583.9,333.7 584.2,333.7 584.4,333.7 584.7,333.8 584.9,333.8 585.2,333.8 585.4,333.8 585.7,333.8 585.9,333.8 586.2,333.8 586.4,333.8 586.7,333.8 586.9,333.8 587.2,333.8 587.4,333.8 587.7,333.8 587.9,333.8 588.2,333.8 588.4,333.8 588.7,333.8 588.9,333.8 M596.4,333.8 596.7,333.8 596.9,333.8 597.2,333.8 597.4,333.8 597.7,333.8 597.9,333.8 598.2,333.8 598.4,333.8 598.7,333.8 598.9,333.8 599.2,333.8 599.4,333.8 599.7,333.8 599.9,333.8 600.2,333.8 600.4,333.8 600.7,333.8 600.9,333.8 601.2,333.8 601.4,333.8 601.7,333.8 601.9,333.7 602.2,333.7 602.4,333.7 602.7,333.7 602.9,333.7 603.2,333.7 603.4,333.7 603.7,333.7 603.9,333.7 604.2,333.7 604.4,333.7 604.7,333.7 604.9,333.7 605.2,333.7 605.4,333.7 605.7,333.7 605.9,333.7 606.2,333.6 606.4,333.6 606.7,333.6 606.9,333.6 607.2,333.6 607.4,333.6 607.7,333.6 607.9,333.6 608.2,333.6 608.4,333.6 608.7,333.6 608.9,333.6 M616.4,333.2 616.6,333.2 616.9,333.2 617.1,333.2 617.4,333.2 617.6,333.2 617.9,333.2 618.1,333.2 618.4,333.2 618.6,333.1 618.9,333.1 619.1,333.1 619.4,333.1 619.6,333.1 619.9,333.1 620.1,333.1 620.4,333.0 620.6,333.0 620.9,333.0 621.1,333.0 621.4,333.0 621.6,333.0 621.9,333.0 622.1,332.9 622.4,332.9 622.6,332.9 622.9,332.9 623.1,332.9 623.4,332.9 623.6,332.9 623.9,332.8 624.1,332.8 624.4,332.8 624.6,332.8 624.9,332.8 625.1,332.8 625.4,332.8 625.6,332.7 625.9,332.7 626.1,332.7 626.4,332.7 626.6,332.7 626.9,332.7 627.1,332.6 627.4,332.6 627.6,332.6 627.9,332.6 628.1,332.6 628.4,332.6 628.6,332.5 628.8,332.5 M636.2,332.0 636.5,332.0 636.8,332.0 637.0,331.9 637.2,331.9 637.5,331.9 637.8,331.9 638.0,331.9 638.2,331.8 638.5,331.8 638.8,331.8 639.0,331.8 639.2,331.8 639.5,331.7 639.8,331.7 640.0,331.7 640.2,331.7 640.5,331.7 640.8,331.6 641.0,331.6 641.2,331.6 641.5,331.6 641.8,331.6 642.0,331.5 642.2,331.5 642.5,331.5 642.8,331.5 643.0,331.5 643.2,331.4 643.5,331.4 643.8,331.4 644.0,331.4 644.2,331.4 644.5,331.3 644.8,331.3 645.0,331.3 645.2,331.3 645.5,331.2 645.8,331.2 646.0,331.2 646.2,331.2 646.5,331.2 646.8,331.1 647.0,331.1 647.2,331.1 647.5,331.1 647.8,331.0 648.0,331.0 648.2,331.0 648.5,331.0 648.6,331.0 M656.0,330.3 656.2,330.3 656.5,330.3 656.8,330.2 657.0,330.2 657.2,330.2 657.5,330.2 657.8,330.1 658.0,330.1 658.2,330.1 658.5,330.1 658.8,330.0 659.0,330.0 659.2,330.0 659.5,330.0 659.8,330.0 660.0,329.9 660.2,329.9 660.5,329.9 660.8,329.9 661.0,329.8 661.2,329.8 661.5,329.8 661.8,329.8 662.0,329.7 662.2,329.7 662.5,329.7 662.8,329.7 663.0,329.6 663.2,329.6 663.5,329.6 663.8,329.6 664.0,329.5 664.2,329.5 664.5,329.5 664.8,329.5 665.0,329.4 665.2,329.4 665.5,329.4 665.8,329.4 666.0,329.4 666.2,329.3 666.5,329.3 666.8,329.3 667.0,329.3 667.2,329.2 667.5,329.2 667.8,329.2 668.0,329.2 668.2,329.1 668.3,329.1 M675.7,328.4 675.9,328.4 676.2,328.3 676.4,328.3 676.7,328.3 676.9,328.3 677.2,328.2 677.4,328.2 677.7,328.2 677.9,328.2 678.2,328.1 678.4,328.1 678.7,328.1 678.9,328.1 679.2,328.0 679.4,328.0 679.7,328.0 679.9,328.0 680.2,327.9 680.4,327.9 680.7,327.9 680.9,327.9 681.2,327.8 681.4,327.8 681.7,327.8 681.9,327.8 682.2,327.7 682.4,327.7 682.7,327.7 682.9,327.7 683.2,327.6 683.4,327.6 683.7,327.6 683.9,327.6 684.2,327.5 684.4,327.5 684.7,327.5 684.9,327.5 685.2,327.4 685.4,327.4 685.7,327.4 685.9,327.4 686.2,327.4 686.4,327.3 686.7,327.3 686.9,327.3 687.2,327.3 687.4,327.2 687.7,327.2 687.9,327.2 688.0,327.2 M695.4,326.4 695.6,326.4 695.9,326.4 696.1,326.4 696.4,326.4 696.6,326.3 696.9,326.3 697.1,326.3 697.4,326.3 697.6,326.2 697.9,326.2 698.1,326.2 698.4,326.2 698.6,326.1 698.9,326.1 699.1,326.1 699.4,326.1 699.6,326.0 699.9,326.0 700.1,326.0 700.4,326.0 700.6,325.9 700.9,325.9 701.1,325.9 701.4,325.9 701.6,325.8 701.9,325.8 702.1,325.8 702.4,325.8 702.6,325.8 702.9,325.7 703.1,325.7 703.4,325.7 703.6,325.7 703.9,325.6 704.1,325.6 704.4,325.6 704.6,325.6 704.9,325.5 705.1,325.5 705.4,325.5 705.6,325.5 705.9,325.4 706.1,325.4 706.4,325.4 706.6,325.4 706.9,325.4 707.1,325.3 707.4,325.3 707.6,325.3 707.7,325.3 M715.1,324.6 715.3,324.6 715.6,324.6 715.8,324.5 716.1,324.5 716.3,324.5 716.6,324.5 716.8,324.5 717.1,324.4 717.3,324.4 717.6,324.4 717.8,324.4 718.1,324.3 718.3,324.3 718.6,324.3 718.8,324.3 719.1,324.3 719.3,324.2 719.6,324.2 719.8,324.2 720.1,324.2 720.3,324.2 720.6,324.1 720.8,324.1 721.1,324.1 721.3,324.1 721.6,324.0 721.8,324.0 722.1,324.0 722.3,324.0 722.6,324.0 722.8,323.9 723.1,323.9 723.3,323.9 723.6,323.9 723.8,323.9 724.1,323.8 724.3,323.8 724.6,323.8 724.8,323.8 725.1,323.8 725.3,323.7 725.6,323.7 725.8,323.7 726.1,323.7 726.3,323.7 726.6,323.6 726.8,323.6 727.1,323.6 727.3,323.6 727.4,323.6 M734.8,323.0 735.1,323.0 735.3,323.0 735.6,322.9 735.8,322.9 736.1,322.9 736.3,322.9 736.6,322.9 736.8,322.8 737.1,322.8 737.3,322.8 737.6,322.8 737.8,322.8 738.1,322.8 738.3,322.7 738.6,322.7 738.8,322.7 739.1,322.7 739.3,322.7 739.6,322.6 739.8,322.6 740.1,322.6 740.3,322.6 740.6,322.6 740.8,322.6 741.1,322.5 741.3,322.5 741.6,322.5 741.8,322.5 742.1,322.5 742.3,322.5 742.6,322.4 742.8,322.4 743.1,322.4 743.3,322.4 743.6,322.4 743.8,322.3 744.1,322.3 744.3,322.3 744.6,322.3 744.8,322.3 745.1,322.3 745.3,322.2 745.6,322.2 745.8,322.2 746.1,322.2 746.3,322.2 746.6,322.2 746.8,322.1 747.1,322.1 747.2,322.1 M754.7,321.7 754.9,321.6 755.2,321.6 755.4,321.6 755.7,321.6 755.9,321.6 756.2,321.6 756.4,321.6 756.7,321.5 756.9,321.5 757.2,321.5 757.4,321.5 757.7,321.5 757.9,321.5 758.2,321.5 758.4,321.4 758.7,321.4 758.9,321.4 759.2,321.4 759.4,321.4 759.7,321.4 759.9,321.4 760.2,321.4 760.4,321.3 760.7,321.3 760.9,321.3 761.2,321.3 761.4,321.3 761.7,321.3 761.9,321.3 762.2,321.2 762.4,321.2 762.7,321.2 762.9,321.2 763.2,321.2 763.4,321.2 763.7,321.2 763.9,321.2 764.2,321.1 764.4,321.1 764.7,321.1 764.9,321.1 765.2,321.1 765.4,321.1 765.7,321.1 765.9,321.1 766.2,321.0 766.4,321.0 766.7,321.0 766.9,321.0 767.1,321.0 M774.6,320.7 774.9,320.7 775.1,320.6 775.4,320.6 775.6,320.6 775.9,320.6 776.1,320.6 776.4,320.6 776.6,320.6 776.9,320.6 777.1,320.6 777.4,320.6 777.6,320.5 777.9,320.5 778.1,320.5 778.4,320.5 778.6,320.5 778.9,320.5 779.1,320.5 779.4,320.5 779.6,320.5 779.9,320.5 780.1,320.5 780.4,320.4 780.6,320.4 780.9,320.4 781.1,320.4 781.4,320.4 781.6,320.4 781.9,320.4 782.1,320.4 782.4,320.4 782.6,320.4 782.9,320.4 783.1,320.3 783.4,320.3 783.6,320.3 783.9,320.3 784.1,320.3 784.4,320.3 784.6,320.3 784.9,320.3 785.1,320.3 785.4,320.3 785.6,320.3 785.9,320.3 786.1,320.2 786.4,320.2 786.6,320.2 786.9,320.2 787.1,320.2 M794.6,320.0 794.8,320.0 795.1,320.0 795.3,320.0 795.6,320.0 795.8,320.0 796.1,320.0 796.3,320.0 796.6,320.0 796.8,320.0 797.1,320.0 797.3,320.0 797.6,319.9 797.8,319.9 798.1,319.9 798.3,319.9 798.6,319.9 798.8,319.9 799.1,319.9 799.3,319.9 799.6,319.9 799.8,319.9 800.1,319.9 800.3,319.9 800.6,319.9 800.8,319.9 801.1,319.9 801.3,319.9 801.6,319.9 801.8,319.9 802.1,319.9 802.3,319.9 802.6,319.8 802.8,319.8 803.1,319.8 803.3,319.8 803.6,319.8 803.8,319.8 804.1,319.8 804.3,319.8 804.6,319.8 804.8,319.8 805.1,319.8 805.3,319.8 805.6,319.8 805.8,319.8 806.1,319.8 806.3,319.8 806.6,319.8 806.8,319.8 807.1,319.8" stroke="#14bb14" stroke-width="3" fill="none" shape-rendering="crispEdges"/>
<path d="M122.5,498.5 122.8,498.5 123.0,498.5 123.2,498.5 123.5,498.5 123.8,498.5 124.0,498.5 124.2,498.4 124.5,498.4 124.8,498.4 125.0,498.4 125.2,498.4 125.5,498.3 125.8,498.3 126.0,498.3 126.2,498.2 126.5,498.2 126.8,498.2 127.0,498.1 127.2,498.1 127.5,498.0 127.8,498.0 128.0,497.9 128.2,497.9 128.5,497.8 128.8,497.8 129.0,497.7 129.2,497.7 129.5,497.6 129.8,497.5 130.0,497.5 130.2,497.4 130.5,497.3 130.8,497.3 131.0,497.2 131.2,497.1 131.5,497.0 131.8,496.9 132.0,496.8 132.2,496.8 132.5,496.7 132.8,496.6 133.0,496.5 133.2,496.4 133.5,496.3 133.8,496.2 134.0,496.1 134.2,496.0 134.5,495.9 134.8,495.8 135.0,495.7 135.2,495.5 135.5,495.4 135.8,495.3 136.0,495.2 136.2,495.1 136.5,494.9 136.8,494.8 137.0,494.7 137.2,494.6 137.5,494.4 137.8,494.3 138.0,494.2 138.2,494.0 138.5,493.9 138.8,493.7 139.0,493.6 139.2,493.5 139.5,493.3 139.8,493.2 140.0,493.0 140.2,492.8 140.5,492.7 140.8,492.5 141.0,492.4 141.1,492.3 M145.4,489.2 145.6,489.0 145.9,488.8 146.1,488.6 146.4,488.4 146.6,488.2 146.9,488.0 147.1,487.8 147.4,487.6 147.6,487.4 M151.2,484.1 151.5,483.9 151.8,483.6 152.0,483.4 152.2,483.1 152.5,482.9 152.8,482.6 153.0,482.4 153.2,482.1 153.5,481.9 153.8,481.6 154.0,481.4 154.2,481.1 154.5,480.8 154.8,480.6 155.0,480.3 155.2,480.0 155.5,479.8 155.8,479.5 156.0,479.2 156.2,479.0 156.5,478.7 156.8,478.4 157.0,478.1 157.2,477.8 157.5,477.6 157.8,477.3 158.0,477.0 158.2,476.7 158.5,476.4 158.8,476.1 159.0,475.8 159.2,475.5 159.5,475.2 159.8,474.9 160.0,474.6 160.2,474.3 160.5,474.0 160.8,473.7 161.0,473.4 161.2,473.1 161.5,472.8 161.8,472.5 162.0,472.2 162.2,471.9 162.5,471.6 162.8,471.3 163.0,470.9 163.2,470.7 M165.9,467.1 166.2,466.8 166.4,466.4 166.7,466.1 166.9,465.8 167.2,465.4 167.4,465.2 M170.0,461.5 170.2,461.1 170.5,460.8 170.8,460.4 171.0,460.0 171.2,459.7 171.5,459.3 171.8,459.0 172.0,458.6 172.2,458.2 172.5,457.8 172.8,457.5 173.0,457.1 173.2,456.7 173.5,456.4 173.8,456.0 174.0,455.6 174.2,455.2 174.5,454.8 174.8,454.5 175.0,454.1 175.2,453.7 175.5,453.3 175.8,452.9 176.0,452.5 176.2,452.2 176.5,451.8 176.8,451.4 177.0,451.0 177.2,450.6 177.5,450.2 177.8,449.8 178.0,449.4 178.2,449.0 178.5,448.6 178.8,448.2 179.0,447.8 179.2,447.5 M181.5,443.8 181.8,443.4 182.0,442.9 182.2,442.5 182.5,442.1 182.8,441.7 M184.9,438.0 185.2,437.6 185.4,437.2 185.7,436.7 185.9,436.3 186.2,435.9 186.4,435.5 186.7,435.0 186.9,434.6 187.2,434.2 187.4,433.7 187.7,433.3 187.9,432.9 188.2,432.4 188.4,432.0 188.7,431.6 188.9,431.1 189.2,430.7 189.4,430.2 189.7,429.8 189.9,429.4 190.2,428.9 190.4,428.5 190.7,428.0 190.9,427.6 191.2,427.1 191.4,426.7 191.7,426.3 191.9,425.8 192.2,425.4 192.4,424.9 192.7,424.5 192.9,424.0 193.1,423.8 M195.1,420.2 195.3,419.7 195.6,419.3 195.8,418.8 196.1,418.3 196.2,418.0 M198.2,414.3 198.5,413.8 198.8,413.4 199.0,412.9 199.2,412.5 199.5,412.0 199.8,411.5 200.0,411.1 200.2,410.6 200.5,410.1 200.8,409.7 201.0,409.2 201.2,408.7 201.5,408.2 201.8,407.8 202.0,407.3 202.2,406.8 202.5,406.4 202.8,405.9 203.0,405.4 203.2,405.0 203.5,404.5 203.8,404.0 204.0,403.5 204.2,403.1 204.5,402.6 204.8,402.1 205.0,401.6 205.2,401.2 205.5,400.7 205.8,400.2 205.9,400.0 M207.8,396.3 208.1,395.8 208.3,395.3 208.6,394.8 208.8,394.4 208.9,394.2 M210.8,390.5 211.1,390.0 211.3,389.5 211.6,389.1 211.8,388.6 212.1,388.1 212.3,387.6 212.6,387.1 212.8,386.6 213.1,386.2 213.3,385.7 213.6,385.2 213.8,384.7 214.1,384.2 214.3,383.7 214.6,383.3 214.8,382.8 215.1,382.3 215.3,381.8 215.6,381.3 215.8,380.8 216.1,380.4 216.3,379.9 216.6,379.4 216.8,378.9 217.1,378.4 217.3,377.9 217.6,377.5 217.8,377.0 218.1,376.5 218.2,376.1 M220.2,372.4 220.4,371.9 220.7,371.4 220.9,370.9 221.2,370.4 221.2,370.3 M223.2,366.6 223.4,366.1 223.7,365.6 223.9,365.1 224.2,364.6 224.4,364.1 224.7,363.7 224.9,363.2 225.2,362.7 225.4,362.2 225.7,361.7 225.9,361.2 226.2,360.8 226.4,360.3 226.7,359.8 226.9,359.3 227.2,358.8 227.4,358.4 227.7,357.9 227.9,357.4 228.2,356.9 228.4,356.4 228.7,356.0 228.9,355.5 229.2,355.0 229.4,354.5 229.7,354.0 229.9,353.6 230.2,353.1 230.4,352.6 230.6,352.3 M232.6,348.4 232.9,348.0 233.1,347.5 233.4,347.0 233.6,346.5 233.7,346.4 M235.7,342.7 235.9,342.2 236.2,341.7 236.4,341.3 236.7,340.8 236.9,340.3 237.2,339.8 237.4,339.4 237.7,338.9 237.9,338.4 238.2,338.0 238.4,337.5 238.7,337.1 238.9,336.6 239.2,336.1 239.4,335.7 239.7,335.2 239.9,334.7 240.2,334.3 240.4,333.8 240.7,333.4 240.9,332.9 241.2,332.4 241.4,332.0 241.7,331.5 241.9,331.1 242.2,330.6 242.4,330.1 242.7,329.7 242.9,329.2 243.2,328.8 243.4,328.4 M245.4,324.7 245.7,324.3 245.9,323.8 246.2,323.4 246.4,322.9 246.6,322.6 M248.7,318.9 248.9,318.5 249.2,318.0 249.4,317.6 249.7,317.2 249.9,316.7 250.2,316.3 250.4,315.8 250.7,315.4 250.9,315.0 251.2,314.5 251.4,314.1 251.7,313.7 251.9,313.2 252.2,312.8 252.4,312.4 252.7,312.0 252.9,311.5 253.2,311.1 253.4,310.7 253.7,310.2 253.9,309.8 254.2,309.4 254.4,309.0 254.7,308.5 254.9,308.1 255.2,307.7 255.4,307.3 255.7,306.9 255.9,306.4 256.2,306.0 256.4,305.6 256.7,305.2 256.9,304.8 257.0,304.7 M259.2,301.0 259.5,300.6 259.8,300.1 260.0,299.7 260.2,299.3 260.5,298.9 M262.8,295.2 263.1,294.8 263.3,294.5 263.6,294.1 263.8,293.7 264.1,293.3 264.3,292.9 264.6,292.5 264.8,292.1 265.1,291.7 265.3,291.3 265.6,291.0 265.8,290.6 266.1,290.2 266.3,289.8 266.6,289.4 266.8,289.0 267.1,288.7 267.3,288.3 267.6,287.9 267.8,287.5 268.1,287.2 268.3,286.8 268.6,286.4 268.8,286.0 269.1,285.7 269.3,285.3 269.6,284.9 269.8,284.6 270.1,284.2 270.3,283.8 270.6,283.5 270.8,283.1 271.1,282.7 271.3,282.4 271.6,282.0 271.8,281.7 272.1,281.3 M274.7,277.6 274.9,277.3 275.2,276.9 275.4,276.6 275.7,276.2 275.9,275.9 276.1,275.6 M278.8,272.0 279.1,271.7 279.3,271.4 279.6,271.1 279.8,270.7 280.1,270.4 280.3,270.1 280.6,269.8 280.8,269.5 281.1,269.1 281.3,268.8 281.6,268.5 281.8,268.2 282.1,267.9 282.3,267.6 282.6,267.3 282.8,267.0 283.1,266.6 283.3,266.3 283.6,266.0 283.8,265.7 284.1,265.4 284.3,265.1 284.6,264.8 284.8,264.5 285.1,264.2 285.3,263.9 285.6,263.6 285.8,263.3 286.1,263.0 286.3,262.7 286.6,262.5 286.8,262.2 287.1,261.9 287.3,261.6 287.6,261.3 287.8,261.0 288.1,260.7 288.3,260.4 288.6,260.2 288.8,259.9 289.1,259.6 289.3,259.3 289.6,259.1 289.8,258.8 290.1,258.5 290.1,258.4 M293.4,255.0 293.6,254.7 293.9,254.5 294.1,254.2 294.4,254.0 294.6,253.7 294.9,253.5 295.1,253.2 295.2,253.1 M298.8,249.7 299.1,249.5 299.3,249.2 299.6,249.0 299.8,248.8 300.1,248.6 300.3,248.3 300.6,248.1 300.8,247.9 301.1,247.7 301.3,247.5 301.6,247.3 301.8,247.0 302.1,246.8 302.3,246.6 302.6,246.4 302.8,246.2 303.1,246.0 303.3,245.8 303.6,245.6 303.8,245.4 304.1,245.2 304.3,245.0 304.6,244.8 304.8,244.6 305.1,244.4 305.3,244.2 305.6,244.0 305.8,243.8 306.1,243.6 306.3,243.4 306.6,243.2 306.8,243.0 307.1,242.9 307.3,242.7 307.6,242.5 307.8,242.3 308.1,242.1 308.3,241.9 308.6,241.8 308.8,241.6 309.1,241.4 309.3,241.2 309.6,241.1 309.8,240.9 310.1,240.7 310.3,240.5 310.6,240.4 310.8,240.2 311.1,240.1 311.3,239.9 311.6,239.7 311.8,239.6 312.1,239.4 312.3,239.2 312.6,239.1 312.8,238.9 313.1,238.8 313.3,238.6 313.6,238.5 313.8,238.3 314.1,238.2 314.3,238.0 314.6,237.9 314.8,237.7 314.9,237.7 M320.1,235.0 320.4,234.9 320.6,234.7 320.9,234.6 321.1,234.5 321.4,234.4 321.6,234.3 321.9,234.2 322.1,234.1 322.4,234.0 322.6,233.9 322.9,233.8 323.1,233.7 323.2,233.6 M329.4,231.6 329.6,231.5 329.9,231.4 330.1,231.4 330.4,231.3 330.6,231.3 330.9,231.2 331.1,231.1 331.4,231.1 331.6,231.0 331.9,231.0 332.1,230.9 332.4,230.9 332.6,230.8 332.9,230.8 333.1,230.7 333.4,230.7 333.6,230.6 333.9,230.6 334.1,230.5 334.4,230.5 334.6,230.5 334.9,230.4 335.1,230.4 335.4,230.3 335.6,230.3 335.9,230.3 336.1,230.2 336.4,230.2 336.6,230.2 336.9,230.1 337.1,230.1 337.4,230.1 337.6,230.1 337.9,230.0 338.1,230.0 338.4,230.0 338.6,230.0 338.9,230.0 339.1,229.9 339.4,229.9 339.6,229.9 339.9,229.9 340.1,229.9 340.4,229.9 340.6,229.9 340.9,229.8 341.1,229.8 341.4,229.8 341.6,229.8 341.9,229.8 342.1,229.8 342.4,229.8 342.6,229.8 342.9,229.8 343.1,229.8 343.4,229.8 343.6,229.8 343.9,229.8 344.1,229.8 344.4,229.8 344.6,229.9 344.9,229.9 345.1,229.9 345.4,229.9 345.6,229.9 345.9,229.9 346.1,229.9 346.4,230.0 346.6,230.0 346.9,230.0 347.1,230.0 347.4,230.0 347.6,230.1 347.9,230.1 348.1,230.1 348.4,230.1 348.6,230.2 348.9,230.2 349.1,230.2 349.4,230.3 349.6,230.3 349.9,230.3 350.1,230.4 350.4,230.4 350.6,230.4 350.9,230.5 351.1,230.5 351.4,230.6 351.6,230.6 351.9,230.6 352.1,230.7 352.4,230.7 352.6,230.8 352.9,230.8 353.1,230.9 353.4,230.9 353.6,231.0 353.9,231.0 354.1,231.1 354.4,231.1 354.6,231.2 354.9,231.3 355.1,231.3 355.4,231.4 355.6,231.4 355.9,231.5 M362.1,233.4 362.4,233.5 362.6,233.6 362.9,233.7 363.1,233.8 363.4,233.9 363.6,234.0 363.9,234.0 364.1,234.1 364.4,234.2 364.6,234.3 364.9,234.4 365.1,234.5 365.4,234.6 M370.9,237.1 371.1,237.3 371.4,237.4 371.6,237.5 371.9,237.7 372.1,237.8 372.4,237.9 372.6,238.0 372.9,238.2 373.1,238.3 373.4,238.4 373.6,238.6 373.9,238.7 374.1,238.8 374.4,239.0 374.6,239.1 374.9,239.3 375.1,239.4 375.4,239.5 375.6,239.7 375.9,239.8 376.1,240.0 376.4,240.1 376.6,240.3 376.9,240.4 377.1,240.6 377.4,240.7 377.6,240.8 377.9,241.0 378.1,241.1 378.4,241.3 378.6,241.5 378.9,241.6 379.1,241.8 379.4,241.9 379.6,242.1 379.9,242.2 380.1,242.4 380.4,242.5 380.6,242.7 380.9,242.9 381.1,243.0 381.4,243.2 381.6,243.3 381.9,243.5 382.1,243.7 382.4,243.8 382.6,244.0 382.9,244.2 383.1,244.3 383.4,244.5 383.6,244.7 383.9,244.8 384.1,245.0 384.4,245.2 384.6,245.3 384.9,245.5 385.1,245.7 385.4,245.9 385.6,246.0 385.9,246.2 386.1,246.4 386.4,246.6 386.6,246.7 386.9,246.9 387.1,247.1 387.4,247.3 387.6,247.5 387.9,247.6 388.1,247.8 388.4,248.0 388.6,248.2 388.9,248.4 M393.1,251.6 393.3,251.8 393.6,252.0 393.8,252.2 394.1,252.4 394.3,252.6 394.6,252.8 394.8,253.0 395.1,253.2 395.3,253.4 M399.2,256.6 399.5,256.8 399.8,257.0 400.0,257.3 400.2,257.5 400.5,257.7 400.8,257.9 401.0,258.1 401.2,258.3 401.5,258.5 401.8,258.8 402.0,259.0 402.2,259.2 402.5,259.4 402.8,259.6 403.0,259.8 403.2,260.1 403.5,260.3 403.8,260.5 404.0,260.7 404.2,260.9 404.5,261.2 404.8,261.4 405.0,261.6 405.2,261.8 405.5,262.1 405.8,262.3 406.0,262.5 406.2,262.7 406.5,263.0 406.8,263.2 407.0,263.4 407.2,263.6 407.5,263.9 407.8,264.1 408.0,264.3 408.2,264.6 408.5,264.8 408.8,265.0 409.0,265.2 409.2,265.5 409.5,265.7 409.8,265.9 410.0,266.2 410.2,266.4 410.5,266.6 410.8,266.9 411.0,267.1 411.2,267.3 411.5,267.6 411.8,267.8 412.0,268.0 412.2,268.3 412.5,268.5 412.8,268.8 413.0,269.0 413.2,269.2 413.4,269.3 M416.9,272.7 417.1,272.9 417.4,273.2 417.6,273.4 417.9,273.7 418.1,273.9 418.4,274.2 418.6,274.4 418.9,274.6 M422.3,278.0 422.6,278.3 422.8,278.5 423.1,278.8 423.3,279.0 423.6,279.3 423.8,279.5 424.1,279.8 424.3,280.0 424.6,280.3 424.8,280.5 425.1,280.8 425.3,281.0 425.6,281.3 425.8,281.5 426.1,281.8 426.3,282.0 426.6,282.3 426.8,282.5 427.1,282.8 427.3,283.0 427.6,283.3 427.8,283.5 428.1,283.8 428.3,284.0 428.6,284.3 428.8,284.5 429.1,284.8 429.3,285.0 429.6,285.3 429.8,285.6 430.1,285.8 430.3,286.1 430.6,286.3 430.8,286.6 431.1,286.8 431.3,287.1 431.6,287.3 431.8,287.6 432.1,287.8 432.3,288.1 432.6,288.3 432.8,288.6 433.1,288.9 433.3,289.1 433.6,289.4 433.8,289.6 434.1,289.9 434.3,290.1 434.6,290.4 434.8,290.6 435.1,290.9 435.3,291.1 M438.7,294.6 438.9,294.8 439.2,295.1 439.4,295.4 439.7,295.6 439.9,295.9 440.2,296.1 440.4,296.4 440.6,296.5 M443.9,299.9 444.2,300.2 444.4,300.5 444.7,300.7 444.9,301.0 445.2,301.2 445.4,301.5 445.7,301.7 445.9,302.0 446.2,302.2 446.4,302.5 446.7,302.7 446.9,303.0 447.2,303.2 447.4,303.5 447.7,303.7 447.9,304.0 448.2,304.3 448.4,304.5 448.7,304.8 448.9,305.0 449.2,305.3 449.4,305.5 449.7,305.8 449.9,306.0 450.2,306.3 450.4,306.5 450.7,306.8 450.9,307.0 451.2,307.3 451.4,307.5 451.7,307.8 451.9,308.0 452.2,308.3 452.4,308.5 452.7,308.8 452.9,309.0 453.2,309.3 453.4,309.5 453.7,309.8 453.9,310.0 454.2,310.3 454.4,310.5 454.7,310.8 454.9,311.0 455.2,311.3 455.4,311.5 455.7,311.8 455.9,312.0 456.2,312.3 456.4,312.5 456.7,312.8 456.9,313.0 M460.4,316.4 460.7,316.7 460.9,316.9 461.2,317.2 461.4,317.4 461.7,317.6 461.9,317.9 462.2,318.1 462.4,318.3 M465.9,321.7 466.2,321.9 466.4,322.2 466.7,322.4 466.9,322.6 467.2,322.9 467.4,323.1 467.7,323.3 467.9,323.6 468.2,323.8 468.4,324.0 468.7,324.3 468.9,324.5 469.2,324.7 469.4,325.0 469.7,325.2 469.9,325.4 470.2,325.7 470.4,325.9 470.7,326.1 470.9,326.4 471.2,326.6 471.4,326.8 471.7,327.0 471.9,327.3 472.2,327.5 472.4,327.7 472.7,327.9 472.9,328.2 473.2,328.4 473.4,328.6 473.7,328.9 473.9,329.1 474.2,329.3 474.4,329.5 474.7,329.7 474.9,330.0 475.2,330.2 475.4,330.4 475.7,330.6 475.9,330.9 476.2,331.1 476.4,331.3 476.7,331.5 476.9,331.7 477.2,332.0 477.4,332.2 477.7,332.4 477.9,332.6 478.2,332.8 478.4,333.0 478.7,333.3 478.9,333.5 479.2,333.7 479.4,333.9 479.7,334.1 479.9,334.3 480.1,334.4 M484.0,337.7 484.2,337.9 484.5,338.2 484.8,338.4 485.0,338.6 485.2,338.8 485.5,339.0 485.8,339.2 486.0,339.4 486.2,339.5 M490.2,342.7 490.5,342.9 490.8,343.1 491.0,343.3 491.2,343.5 491.5,343.7 491.8,343.9 492.0,344.1 492.2,344.2 492.5,344.4 492.8,344.6 493.0,344.8 493.2,345.0 493.5,345.2 493.8,345.4 494.0,345.6 494.2,345.7 494.5,345.9 494.8,346.1 495.0,346.3 495.2,346.5 495.5,346.6 495.8,346.8 496.0,347.0 496.2,347.2 496.5,347.4 496.8,347.5 497.0,347.7 497.2,347.9 497.5,348.1 497.8,348.2 498.0,348.4 498.2,348.6 498.5,348.8 498.8,348.9 499.0,349.1 499.2,349.3 499.5,349.5 499.8,349.6 500.0,349.8 500.2,350.0 500.5,350.1 500.8,350.3 501.0,350.5 501.2,350.6 501.5,350.8 501.8,351.0 502.0,351.1 502.2,351.3 502.5,351.5 502.8,351.6 503.0,351.8 503.2,352.0 503.5,352.1 503.8,352.3 504.0,352.4 504.2,352.6 504.5,352.8 504.8,352.9 505.0,353.1 505.2,353.2 505.5,353.4 505.8,353.5 506.0,353.7 506.2,353.9 506.5,354.0 506.8,354.2 507.0,354.3 507.2,354.4 M512.1,357.3 512.3,357.4 512.6,357.5 512.8,357.7 513.1,357.8 513.3,358.0 513.6,358.1 513.8,358.2 514.1,358.4 514.3,358.5 514.6,358.6 514.8,358.8 514.9,358.8 M520.2,361.4 520.4,361.6 520.7,361.7 520.9,361.8 521.2,361.9 521.4,362.0 521.7,362.1 521.9,362.2 522.2,362.4 522.4,362.5 522.7,362.6 522.9,362.7 523.2,362.8 523.4,362.9 523.7,363.0 523.9,363.1 524.2,363.2 524.4,363.3 524.7,363.4 524.9,363.5 525.2,363.6 525.4,363.7 525.7,363.8 525.9,364.0 526.2,364.1 526.4,364.2 526.7,364.3 526.9,364.3 527.2,364.4 527.4,364.5 527.7,364.6 527.9,364.7 528.2,364.8 528.4,364.9 528.7,365.0 528.9,365.1 529.2,365.2 529.4,365.3 529.7,365.4 529.9,365.5 530.2,365.6 530.4,365.7 530.7,365.7 530.9,365.8 531.2,365.9 531.4,366.0 531.7,366.1 531.9,366.2 532.2,366.3 532.4,366.3 532.7,366.4 532.9,366.5 533.2,366.6 533.4,366.7 533.7,366.8 533.9,366.8 534.2,366.9 534.4,367.0 534.7,367.1 534.9,367.1 535.2,367.2 535.4,367.3 535.7,367.4 535.9,367.4 536.2,367.5 536.4,367.6 536.7,367.7 536.9,367.7 537.2,367.8 537.4,367.9 537.7,367.9 537.9,368.0 538.2,368.1 538.4,368.1 538.7,368.2 538.9,368.3 539.2,368.3 539.4,368.4 539.7,368.5 539.9,368.5 540.2,368.6 540.4,368.6 540.7,368.7 540.9,368.8 541.2,368.8 541.4,368.9 541.7,368.9 541.9,369.0 542.2,369.1 542.4,369.1 542.7,369.2 542.9,369.2 543.2,369.3 543.4,369.3 M550.2,370.5 550.5,370.5 550.8,370.6 551.0,370.6 551.2,370.6 551.5,370.6 551.8,370.7 552.0,370.7 552.2,370.7 552.5,370.8 552.8,370.8 553.0,370.8 553.2,370.8 553.5,370.9 553.8,370.9 554.0,370.9 554.2,370.9 M561.4,371.3 561.6,371.3 561.9,371.3 562.1,371.3 562.4,371.3 562.6,371.3 562.9,371.3 563.1,371.3 563.4,371.3 563.6,371.3 563.9,371.3 564.1,371.3 564.4,371.3 564.6,371.3 564.9,371.3 565.1,371.3 565.4,371.3 565.6,371.3 565.9,371.3 566.1,371.3 566.4,371.2 566.6,371.2 566.9,371.2 567.1,371.2 567.4,371.2 567.6,371.2 567.9,371.2 568.1,371.2 568.4,371.1 568.6,371.1 568.9,371.1 569.1,371.1 569.4,371.1 569.6,371.1 569.9,371.0 570.1,371.0 570.4,371.0 570.6,371.0 570.9,371.0 571.1,371.0 571.4,370.9 571.6,370.9 571.9,370.9 572.1,370.9 572.4,370.8 572.6,370.8 572.9,370.8 573.1,370.8 573.4,370.7 573.6,370.7 573.9,370.7 574.1,370.7 574.4,370.6 574.6,370.6 574.9,370.6 575.1,370.5 575.4,370.5 575.6,370.5 575.9,370.4 576.1,370.4 576.4,370.4 576.6,370.3 576.9,370.3 577.1,370.3 577.4,370.2 577.6,370.2 577.9,370.2 578.1,370.1 578.4,370.1 578.6,370.0 578.9,370.0 579.1,370.0 579.4,369.9 579.6,369.9 579.9,369.8 580.1,369.8 580.4,369.8 580.6,369.7 580.9,369.7 581.1,369.6 581.4,369.6 581.6,369.5 581.9,369.5 582.1,369.4 582.4,369.4 582.6,369.4 582.9,369.3 583.1,369.3 583.4,369.2 583.6,369.2 583.9,369.1 584.1,369.1 584.4,369.0 584.6,369.0 584.9,368.9 585.1,368.8 585.4,368.8 585.6,368.7 585.9,368.7 586.1,368.6 586.4,368.6 586.6,368.5 586.9,368.5 587.1,368.4 587.4,368.3 587.6,368.3 587.9,368.2 588.0,368.2 M594.5,366.5 594.8,366.4 595.0,366.3 595.2,366.3 595.5,366.2 595.8,366.1 596.0,366.0 596.2,366.0 596.5,365.9 596.8,365.8 597.0,365.7 597.2,365.7 597.5,365.6 597.8,365.5 597.9,365.4 M604.1,363.4 604.3,363.3 604.6,363.2 604.8,363.1 605.1,363.0 605.3,362.9 605.6,362.8 605.8,362.7 606.1,362.6 606.3,362.6 606.6,362.5 606.8,362.4 607.1,362.3 607.3,362.2 607.6,362.1 607.8,362.0 608.1,361.9 608.3,361.8 608.6,361.7 608.8,361.6 609.1,361.5 609.3,361.4 609.6,361.3 609.8,361.2 610.1,361.1 610.3,361.0 610.6,360.9 610.8,360.8 611.1,360.7 611.3,360.6 611.6,360.5 611.8,360.4 612.1,360.3 612.3,360.2 612.6,360.1 612.8,360.0 613.1,359.9 613.3,359.8 613.6,359.7 613.8,359.6 614.1,359.5 614.3,359.4 614.6,359.3 614.8,359.2 615.1,359.1 615.3,359.0 615.6,358.9 615.8,358.7 616.1,358.6 616.3,358.5 616.6,358.4 616.8,358.3 617.1,358.2 617.3,358.1 617.6,358.0 617.8,357.9 618.1,357.8 618.3,357.7 618.6,357.6 618.8,357.4 619.1,357.3 619.3,357.2 619.6,357.1 619.8,357.0 620.1,356.9 620.3,356.8 620.6,356.7 620.8,356.5 621.1,356.4 621.3,356.3 621.6,356.2 621.8,356.1 622.1,356.0 622.3,355.9 622.6,355.8 622.8,355.6 623.1,355.5 623.3,355.4 623.6,355.3 623.8,355.2 624.1,355.1 624.3,354.9 624.6,354.8 624.8,354.7 625.1,354.6 625.3,354.5 625.6,354.4 625.8,354.3 M631.1,351.7 631.4,351.5 631.6,351.4 631.9,351.3 632.1,351.2 632.4,351.1 632.6,350.9 632.9,350.8 633.1,350.7 633.4,350.6 633.6,350.4 633.9,350.3 634.1,350.2 M639.3,347.5 639.6,347.4 639.8,347.3 640.1,347.1 640.3,347.0 640.6,346.9 640.8,346.8 641.1,346.6 641.3,346.5 641.6,346.4 641.8,346.2 642.1,346.1 642.3,346.0 642.6,345.8 642.8,345.7 643.1,345.6 643.3,345.5 643.6,345.3 643.8,345.2 644.1,345.1 644.3,344.9 644.6,344.8 644.8,344.7 645.1,344.5 645.3,344.4 645.6,344.3 645.8,344.1 646.1,344.0 646.3,343.9 646.6,343.7 646.8,343.6 647.1,343.5 647.3,343.3 647.6,343.2 647.8,343.1 648.1,343.0 648.3,342.8 648.6,342.7 648.8,342.6 649.1,342.4 649.3,342.3 649.6,342.2 649.8,342.0 650.1,341.9 650.3,341.8 650.6,341.6 650.8,341.5 651.1,341.4 651.3,341.2 651.6,341.1 651.8,341.0 652.1,340.8 652.3,340.7 652.6,340.6 652.8,340.4 653.1,340.3 653.3,340.1 653.6,340.0 653.8,339.9 654.1,339.7 654.3,339.6 654.6,339.5 654.8,339.3 655.1,339.2 655.3,339.1 655.6,338.9 655.8,338.8 656.1,338.7 656.3,338.5 656.6,338.4 656.8,338.3 657.1,338.1 657.3,338.0 657.6,337.9 657.8,337.7 658.1,337.6 658.3,337.5 658.6,337.3 658.8,337.2 658.9,337.1 M664.1,334.4 664.3,334.2 664.6,334.1 664.8,334.0 665.1,333.8 665.3,333.7 665.6,333.6 665.8,333.4 666.1,333.3 666.3,333.2 666.6,333.0 666.8,332.9 666.9,332.9 M672.0,330.1 672.2,330.0 672.5,329.9 672.8,329.8 673.0,329.6 673.2,329.5 673.5,329.4 673.8,329.2 674.0,329.1 674.2,329.0 674.5,328.8 674.8,328.7 675.0,328.6 675.2,328.4 675.5,328.3 675.8,328.2 676.0,328.1 676.2,327.9 676.5,327.8 676.8,327.7 677.0,327.5 677.2,327.4 677.5,327.3 677.8,327.1 678.0,327.0 678.2,326.9 678.5,326.8 678.8,326.6 679.0,326.5 679.2,326.4 679.5,326.2 679.8,326.1 680.0,326.0 680.2,325.9 680.5,325.7 680.8,325.6 681.0,325.5 681.2,325.3 681.5,325.2 681.8,325.1 682.0,325.0 682.2,324.8 682.5,324.7 682.8,324.6 683.0,324.5 683.2,324.3 683.5,324.2 683.8,324.1 684.0,323.9 684.2,323.8 684.5,323.7 684.8,323.6 685.0,323.4 685.2,323.3 685.5,323.2 685.8,323.1 686.0,322.9 686.2,322.8 686.5,322.7 686.8,322.6 687.0,322.5 687.2,322.3 687.5,322.2 687.8,322.1 688.0,322.0 688.2,321.8 688.5,321.7 688.8,321.6 689.0,321.5 689.2,321.3 689.5,321.2 689.8,321.1 690.0,321.0 690.2,320.9 690.5,320.7 690.8,320.6 691.0,320.5 691.2,320.4 691.5,320.3 691.8,320.1 692.0,320.0 692.1,320.0 M697.6,317.4 697.8,317.3 698.1,317.2 698.3,317.1 698.6,316.9 698.8,316.8 699.1,316.7 699.3,316.6 699.6,316.5 699.8,316.4 700.1,316.3 700.3,316.2 700.6,316.0 700.6,316.0 M706.2,313.6 706.4,313.5 706.7,313.4 706.9,313.3 707.2,313.2 707.4,313.1 707.7,313.0 707.9,312.8 708.2,312.7 708.4,312.6 708.7,312.5 708.9,312.4 709.2,312.3 709.4,312.2 709.7,312.1 709.9,312.0 710.2,311.9 710.4,311.8 710.7,311.7 710.9,311.6 711.2,311.5 711.4,311.4 711.7,311.3 711.9,311.2 712.2,311.1 712.4,311.0 712.7,310.9 712.9,310.8 713.2,310.7 713.4,310.6 713.7,310.5 713.9,310.4 714.2,310.3 714.4,310.2 714.7,310.1 714.9,310.0 715.2,309.9 715.4,309.9 715.7,309.8 715.9,309.7 716.2,309.6 716.4,309.5 716.7,309.4 716.9,309.3 717.2,309.2 717.4,309.1 717.7,309.0 717.9,308.9 718.2,308.8 718.4,308.7 718.7,308.6 718.9,308.5 719.2,308.5 719.4,308.4 719.7,308.3 719.9,308.2 720.2,308.1 720.4,308.0 720.7,307.9 720.9,307.8 721.2,307.7 721.4,307.7 721.7,307.6 721.9,307.5 722.2,307.4 722.4,307.3 722.7,307.2 722.9,307.1 723.2,307.0 723.4,307.0 723.7,306.9 723.9,306.8 724.2,306.7 724.4,306.6 724.7,306.5 724.9,306.5 725.2,306.4 725.4,306.3 725.7,306.2 725.9,306.1 726.2,306.0 726.4,306.0 726.7,305.9 726.9,305.8 727.2,305.7 727.4,305.6 727.7,305.6 727.9,305.5 728.2,305.4 728.4,305.3 728.7,305.2 728.9,305.2 M735.2,303.3 735.4,303.3 735.7,303.2 735.9,303.1 736.2,303.1 736.4,303.0 736.7,302.9 736.9,302.9 737.2,302.8 737.4,302.7 737.7,302.7 737.9,302.6 738.2,302.5 738.4,302.5 738.7,302.4 738.8,302.4 M745.4,300.8 745.6,300.8 745.9,300.7 746.1,300.7 746.4,300.6 746.6,300.6 746.9,300.5 747.1,300.4 747.4,300.4 747.6,300.3 747.9,300.3 748.1,300.2 748.4,300.2 748.6,300.1 748.9,300.1 749.1,300.0 749.4,300.0 749.6,299.9 749.9,299.9 750.1,299.9 750.4,299.8 750.6,299.8 750.9,299.7 751.1,299.7 751.4,299.6 751.6,299.6 751.9,299.5 752.1,299.5 752.4,299.4 752.6,299.4 752.9,299.4 753.1,299.3 753.4,299.3 753.6,299.2 753.9,299.2 754.1,299.1 754.4,299.1 754.6,299.1 754.9,299.0 755.1,299.0 755.4,298.9 755.6,298.9 755.9,298.9 756.1,298.8 756.4,298.8 756.6,298.7 756.9,298.7 757.1,298.7 757.4,298.6 757.6,298.6 757.9,298.6 758.1,298.5 758.4,298.5 758.6,298.5 758.9,298.4 759.1,298.4 759.4,298.4 759.6,298.3 759.9,298.3 760.1,298.3 760.4,298.2 760.6,298.2 760.9,298.2 761.1,298.1 761.4,298.1 761.6,298.1 761.9,298.0 762.1,298.0 762.4,298.0 762.6,297.9 762.9,297.9 763.1,297.9 763.4,297.9 763.6,297.8 763.9,297.8 764.1,297.8 764.4,297.8 764.6,297.7 764.9,297.7 765.1,297.7 765.4,297.7 765.6,297.6 765.9,297.6 766.1,297.6 766.4,297.6 766.6,297.5 766.9,297.5 767.1,297.5 767.4,297.5 767.6,297.4 767.9,297.4 768.1,297.4 768.4,297.4 768.6,297.4 768.9,297.3 769.1,297.3 769.4,297.3 769.6,297.3 769.9,297.3 770.1,297.2 770.4,297.2 770.6,297.2 770.9,297.2 771.1,297.2 771.4,297.2 771.6,297.1 771.9,297.1 771.9,297.1 M779.1,296.8 779.4,296.8 779.6,296.8 779.9,296.8 780.1,296.8 780.4,296.8 780.6,296.8 780.9,296.8 781.1,296.8 781.4,296.8 781.6,296.8 781.9,296.8 782.1,296.8 782.4,296.8 782.6,296.8 782.9,296.8 783.1,296.8 M790.3,296.9 790.6,297.0 790.8,297.0 791.1,297.0 791.3,297.0 791.6,297.0 791.8,297.0 792.1,297.0 792.3,297.0 792.6,297.0 792.8,297.1 793.1,297.1 793.3,297.1 793.6,297.1 793.8,297.1 794.1,297.1 794.3,297.1 794.6,297.2 794.8,297.2 795.1,297.2 795.3,297.2 795.6,297.2 795.8,297.2 796.1,297.3 796.3,297.3 796.6,297.3 796.8,297.3 797.1,297.3 797.3,297.3 797.6,297.4 797.8,297.4 798.1,297.4 798.3,297.4 798.6,297.4 798.8,297.5 799.1,297.5 799.3,297.5 799.6,297.5 799.8,297.6 800.1,297.6 800.3,297.6 800.6,297.6 800.8,297.6 801.1,297.7 801.3,297.7 801.6,297.7 801.8,297.7 802.1,297.8 802.3,297.8 802.6,297.8 802.8,297.8 803.1,297.9 803.3,297.9 803.6,297.9 803.8,297.9 804.1,298.0 804.3,298.0 804.6,298.0 804.8,298.0 805.1,298.1 805.3,298.1 805.6,298.1 805.8,298.2 806.1,298.2 806.3,298.2 806.6,298.2 806.8,298.3 807.1,298.3 807.3,298.3 807.6,298.4 807.8,298.4 808.1,298.4 808.3,298.5 808.6,298.5 808.8,298.5 809.0,298.5" stroke="#2f6ef5" stroke-width="3" fill="none" shape-rendering="crispEdges"/>
<g font-family="Liberation Sans, sans-serif" font-size="16" fill="#000">
<text x="109" y="504" text-anchor="end">0.0</text>
<text x="109" y="416" text-anchor="end">0.5</text>
<text x="109" y="328" text-anchor="end">1.0</text>
<text x="109" y="240" text-anchor="end">1.5</text>
<text x="109" y="152" text-anchor="end">2.0</text>
<text x="123.5" y="524" text-anchor="middle">0</text>
<text x="192.5" y="524" text-anchor="middle">1</text>
<text x="260.5" y="524" text-anchor="middle">2</text>
<text x="329.5" y="524" text-anchor="middle">3</text>
<text x="398.5" y="524" text-anchor="middle">4</text>
<text x="466.5" y="524" text-anchor="middle">5</text>
<text x="535.5" y="524" text-anchor="middle">6</text>
<text x="604.5" y="524" text-anchor="middle">7</text>
<text x="672.5" y="524" text-anchor="middle">8</text>
<text x="741.5" y="524" text-anchor="middle">9</text>
<text x="809.5" y="524" text-anchor="middle">10</text>
</g>
<text x="82" y="197" font-family="Liberation Sans, sans-serif" font-size="18">x</text>
<text x="741.5" y="544" font-family="Liberation Sans, sans-serif" font-size="19">t</text>
</svg>
<svg class="a" style="left:0;top:0" width="941" height="110">
<defs>
<linearGradient id="shell" x1="0" y1="0" x2="0" y2="1"><stop offset="0" stop-color="#c00c00"/><stop offset="0.45" stop-color="#d86a10"/><stop offset="1" stop-color="#ecd800"/></linearGradient>
<linearGradient id="gold" x1="0" y1="0" x2="0" y2="1"><stop offset="0" stop-color="#f6cc55"/><stop offset="1" stop-color="#dba628"/></linearGradient>
<linearGradient id="bluebtn" x1="0" y1="0" x2="0" y2="1"><stop offset="0" stop-color="#6fa0e0"/><stop offset="1" stop-color="#2a5aa8"/></linearGradient>
</defs>
<!-- app icon title -->
<g id="appicon">
<rect x="8.5" y="7.5" width="11" height="10" fill="#f4f6fc"/>
<path d="M9,8h10M9,10h10M9,12v5" stroke="#8aa8e0" stroke-width="0.9" stroke-dasharray="1 1"/>
<rect x="11.5" y="10.5" width="13" height="12" fill="#f4f4fa" stroke="#7a7a7a" stroke-width="1"/>
<path d="M17.8,10.8C21,10.8 23.6,13.6 24,17C23,19.5 20,21.5 17.8,22.8C15.5,21.5 12.5,19.5 11.6,17C12,13.6 14.6,10.8 17.8,10.8Z" fill="url(#shell)"/>
</g>
<use href="#appicon" x="-1" y="25"/>
<!-- title controls -->
<path d="M821,15.5H831" stroke="#fff" stroke-width="1"/>
<rect x="866.5" y="10.5" width="9" height="9" fill="none" stroke="#fff" stroke-width="1"/>
<path d="M912,10L922,20M922,10L912,20" stroke="#fff" stroke-width="1"/>
<!-- MDI buttons -->
<rect x="883.5" y="32.5" width="17" height="17" rx="2" fill="#fff" stroke="#e4e4e4"/>
<rect x="902.5" y="32.5" width="17" height="17" rx="2" fill="#fff" stroke="#e4e4e4"/>
<rect x="921.5" y="32.5" width="17" height="17" rx="2" fill="#fff" stroke="#e4e4e4"/>
<rect x="888" y="43" width="6" height="2" fill="#5f6e7c"/>
<path d="M907.5,40.5h5.5v4.5h-5.5z" fill="none" stroke="#5f6e7c" stroke-width="1"/><path d="M907,40.5h6.5" stroke="#5f6e7c" stroke-width="1.6"/><path d="M910,39V37.5h5.5V42H913.5" fill="none" stroke="#5f6e7c" stroke-width="1"/><path d="M910,37.5h6" stroke="#5f6e7c" stroke-width="1.4"/>
<path d="M927.2,38.3L933.8,44.7M933.8,38.3L927.2,44.7" stroke="#5f6e7c" stroke-width="1.8"/>
<!-- grippers -->
<g fill="#9c9c9c"><rect x="5" y="54" width="2" height="2"/><rect x="6" y="54" width="1" height="1" fill="#c8c8c8"/><rect x="5" y="58" width="2" height="2"/><rect x="6" y="58" width="1" height="1" fill="#c8c8c8"/><rect x="5" y="62" width="2" height="2"/><rect x="6" y="62" width="1" height="1" fill="#c8c8c8"/><rect x="5" y="66" width="2" height="2"/><rect x="6" y="66" width="1" height="1" fill="#c8c8c8"/><rect x="5" y="70" width="2" height="2"/><rect x="6" y="70" width="1" height="1" fill="#c8c8c8"/><rect x="5" y="74" width="2" height="2"/><rect x="6" y="74" width="1" height="1" fill="#c8c8c8"/><rect x="5" y="82" width="2" height="2"/><rect x="6" y="82" width="1" height="1" fill="#c8c8c8"/><rect x="5" y="86" width="2" height="2"/><rect x="6" y="86" width="1" height="1" fill="#c8c8c8"/><rect x="5" y="90" width="2" height="2"/><rect x="6" y="90" width="1" height="1" fill="#c8c8c8"/><rect x="5" y="94" width="2" height="2"/><rect x="6" y="94" width="1" height="1" fill="#c8c8c8"/><rect x="5" y="98" width="2" height="2"/><rect x="6" y="98" width="1" height="1" fill="#c8c8c8"/></g>
<!-- folder open -->
<rect x="18.5" y="59.5" width="15" height="13" fill="#e2ae2e" stroke="#a87c0c"/><path d="M20.5,65V57.5h8l2.5,2.5V65" fill="#f6f8fa" stroke="#6e7884"/><path d="M22,60h7M22,62h8" stroke="#8590a0" stroke-width="0.9"/><rect x="18.5" y="65.5" width="15" height="7" fill="url(#gold)" stroke="#a87c0c"/>
<rect x="42.5" y="62.5" width="13" height="12" fill="#e2ae2e" stroke="#a87c0c"/><path d="M44.5,68V60.5h6l2.5,2.5V68" fill="#f6f8fa" stroke="#6e7884"/><path d="M46,63h5M46,65h6" stroke="#8590a0" stroke-width="0.9"/><rect x="42.5" y="68.5" width="13" height="6" fill="url(#gold)" stroke="#a87c0c"/>
<path d="M56.5,57v7M53,60.5h7" stroke="#46a846" stroke-width="2.6"/><path d="M56.5,57.5v6M53.5,60.5h6" stroke="#78c878" stroke-width="0.8"/>
<rect x="67.5" y="62.5" width="13" height="12" fill="#e2ae2e" stroke="#a87c0c"/><path d="M69.5,68V60.5h6l2.5,2.5V68" fill="#f6f8fa" stroke="#6e7884"/><path d="M71,63h5M71,65h6" stroke="#8590a0" stroke-width="0.9"/><rect x="67.5" y="68.5" width="13" height="6" fill="url(#gold)" stroke="#a87c0c"/>
<rect x="78" y="58" width="7" height="3" rx="0.5" fill="#e0202c"/><path d="M79.5,59.5h4" stroke="#ff9090" stroke-width="0.7"/>
<!-- printer -->
<path d="M96.5,65.5V58.5h6.5l2.5,2.5v4.5" fill="#d4e4fa" stroke="#4a86d0"/>
<path d="M95,63.5h12a1.5,1.5 0 0 1 1.5,1.5v6.5h-15v-6.5a1.5,1.5 0 0 1 1.5,-1.5z" fill="#f6f6f6" stroke="#505050"/>
<rect x="96" y="67" width="10" height="3" fill="#c4c4c4"/>
<path d="M96.5,71.5v2h9v-2" fill="#eaf2fc" stroke="#4a86d0"/>
<!-- camera -->
<rect x="118.8" y="60.6" width="14.4" height="10.6" rx="1.6" fill="#eef1f4" stroke="#3e4c58" stroke-width="1.3"/>
<rect x="124" y="58.8" width="5" height="2" fill="#3e4c58"/>
<rect x="120" y="62" width="2" height="8" fill="#ffffff"/>
<circle cx="127" cy="65.9" r="3.6" fill="#c8d4de" stroke="#7c8a96" stroke-width="0.9"/>
<circle cx="127" cy="65.9" r="2.2" fill="#2a78c8"/>
<circle cx="126.6" cy="65.4" r="0.7" fill="#e8f4ff"/>
<!-- WMF -->
<rect x="142.5" y="57.5" width="17" height="11" fill="#fff" stroke="#2a3d6a"/>
<path d="M143.5,59.5h3.5v8h12" fill="none" stroke="#1a9080" stroke-width="1.1"/>
<path d="M143.5,64.5l2,-2l2,-0.5l2.5,-2l2,1.5l2,-1l2,1l2,-1.2" fill="none" stroke="#e02030" stroke-width="0.9"/>
<path d="M143,66.5h5v-1.5h3v-2h8" fill="none" stroke="#1a2aa8" stroke-width="1.1"/>
<path d="M143.8,70.3l1.2,4.1l1.3,-3.2l1.3,3.2l1.2,-4.1 M149.6,74.6v-4.3l1.7,2.6l1.7,-2.6v4.3 M155,74.6v-4.3h3 M155,72.4h2.5" fill="none" stroke="#24344a" stroke-width="1.05"/>
<!-- separators tb1 -->
<g fill="#a0a0a0">
<rect x="165" y="55" width="1" height="20"/>
<rect x="269" y="55" width="1" height="20"/>
<rect x="348" y="55" width="1" height="20"/>
<rect x="377" y="55" width="1" height="20"/>
<rect x="431" y="55" width="1" height="20"/>
<rect x="485" y="55" width="1" height="20"/>
</g>
<!-- properties -->
<rect x="172.5" y="62.5" width="11" height="10" fill="#e4ecf8" stroke="#2e4a78"/>
<path d="M174,67.5h1.5M177,67.5h5M174,70h1.5M177,70h5" stroke="#8a98b0" stroke-width="0.9"/>
<path d="M174.5,65.5L180,60L184,59L186.5,60.5L185,64L180.5,66.5L177,68z" fill="#e0b840"/>
<path d="M176,64.5l1,1M178,62.5l1,1M180,61l1,1M177.5,66l1,-1M179.5,64l1,-1M181.5,62l1,-1" stroke="#f8e8a0" stroke-width="0.7"/>
<ellipse cx="184.3" cy="61.2" rx="2.3" ry="2" fill="#f0c030" stroke="#b08010" stroke-width="0.5"/>
<path d="M186.5,59.3l1.8,-0.5v8l-1.8,-1.5z" fill="#3aa84a"/>
<!-- frame -->
<rect x="200.5" y="59.5" width="13" height="10" fill="#fbfcfe" stroke="#2e4058"/>
<g stroke="#3a6fd8" stroke-width="1.1" fill="none">
<path d="M196,60.5h4M198,58.7l2,1.8l-2,1.8"/>
<path d="M196,68.5h4M198,66.7l2,1.8l-2,1.8"/>
<path d="M201.5,75v-4.5M199.7,72.3l1.8,-2l1.8,2"/>
<path d="M211.5,75v-4.5M209.7,72.3l1.8,-2l1.8,2"/>
</g>
<!-- pressed buttons -->
<rect x="218.5" y="53.5" width="24" height="23" fill="#c6d6f0" stroke="#7ba0d8"/>
<rect x="242.5" y="53.5" width="25" height="23" fill="#c6d6f0" stroke="#7ba0d8"/>
<rect x="272.5" y="53.5" width="24" height="23" fill="#c6d6f0" stroke="#7ba0d8"/>
<path d="M222,59.5h15" stroke="#1c1c9c" stroke-width="1.6"/>
<path d="M222,63.5h15" stroke="#b03060" stroke-width="1.6"/>
<path d="M222,67.5h15" stroke="#e8c040" stroke-width="1.6"/>
<path d="M222,71.5h15" stroke="#d01828" stroke-width="1.6"/>
<path d="M247,59.5h15" stroke="#1c1c9c" stroke-width="1.6"/>
<path d="M247,63.5h15" stroke="#1c1c9c" stroke-width="1.6" stroke-dasharray="3 1.5"/>
<path d="M247,67.5h15" stroke="#1c1c9c" stroke-width="1.6" stroke-dasharray="4 1 1.5 1"/>
<path d="M247,71.5h15" stroke="#1c1c9c" stroke-width="1.6" stroke-dasharray="1 1"/>
<text x="274" y="65.5" font-family="Liberation Serif,serif" font-style="italic" font-size="11" fill="#22309a">ω</text>
<path d="M283,61.5h4M283,63.8h4" stroke="#5060a8" stroke-width="0.9"/>
<path d="M288,66h1M291,66h1" stroke="#2a3a80" stroke-width="1"/>
<path d="M276,69.7h17" stroke="#2a4aa8" stroke-width="1.6"/>
<rect x="283.5" y="68" width="3" height="3.5" rx="1" fill="#1c3aa0"/>
<!-- crosshair -->
<rect x="300.5" y="58.5" width="16" height="16" fill="#e6eef8" stroke="#3a4c6c" stroke-width="1.2"/>
<path d="M308.5,59v15M301,66.5h15" stroke="#8aa0bc" stroke-width="1"/>
<circle cx="308.5" cy="66.5" r="5.6" fill="none" stroke="#e01a30" stroke-width="1.1" stroke-dasharray="1.8 1"/>
<!-- ruler/triangle -->
<path d="M326.5,58.5v11h11z" fill="#4a7ae0" stroke="#2a4ab0" stroke-width="0.9"/>
<path d="M328.8,64.5v3h3z" fill="#1a3aa0"/>
<circle cx="329.6" cy="66.4" r="0.6" fill="#fff"/>
<path d="M333.5,67.5l7.5,-7.5l1.8,1.8l-7.5,7.5z" fill="#f2d868" stroke="#3a3020" stroke-width="0.7"/>
<path d="M333.5,67.5l-0.8,2.6l2.6,-0.8z" fill="#fff" stroke="#3a3020" stroke-width="0.5"/>
<circle cx="342.2" cy="59.6" r="1.5" fill="#e08060"/>
<rect x="327.5" y="69.5" width="15" height="4" fill="#e8c040" stroke="#8a6a08" stroke-width="0.9"/>
<path d="M329.5,70v1.5M331.5,70v1M333.5,70v1.5M335.5,70v1M337.5,70v1.5M339.5,70v1" stroke="#8a6a08" stroke-width="0.6"/>
<!-- A -->
<path d="M354.8,72.5L360.3,58.5h4L370,72.5h-3.6l-1.3,-3.5h-5.6l-1.3,3.5z M360.5,66.2h3.7L362.35,61.2z" fill="#d8e6f8" stroke="#2a60b8" stroke-width="1.2" fill-rule="evenodd" stroke-linejoin="round"/>
<!-- folder export -->
<path d="M383.5,74.5v-11h5l2,2h6v9z" fill="url(#gold)" stroke="#b4860e"/>
<path d="M383.5,69.5h13" stroke="#c89818" stroke-width="0.8"/>
<g stroke="#1a2a60" stroke-width="0.8">
<rect x="395" y="57" width="6" height="5" fill="#fff"/><rect x="395" y="57" width="6" height="1.6" fill="#3a68d8"/>
<rect x="393" y="59" width="6" height="5" fill="#fff"/><rect x="393" y="59" width="6" height="1.6" fill="#3a68d8"/>
<rect x="391" y="61" width="6" height="5" fill="#fff"/><rect x="391" y="61" width="6" height="1.6" fill="#3a68d8"/>
</g>
<path d="M384.5,63.5Q385,59 389,58.5" fill="none" stroke="#c01830" stroke-width="1.2"/>
<path d="M388,56.5l3,2l-3,2z" fill="#c01830"/>
<!-- import -->
<g stroke="#1a2a60" stroke-width="0.8">
<rect x="412" y="57" width="6" height="5" fill="#fff"/><rect x="412" y="57" width="6" height="1.6" fill="#3a68d8"/>
<rect x="410" y="59" width="6" height="5" fill="#fff"/><rect x="410" y="59" width="6" height="1.6" fill="#3a68d8"/>
<rect x="408.5" y="61" width="6" height="5.5" fill="#fff"/><rect x="408.5" y="61" width="6" height="1.6" fill="#3a68d8"/>
</g>
<rect x="416.5" y="65.5" width="9" height="9" fill="#4a80d0" stroke="#2a56a0"/>
<rect x="418" y="66.5" width="6" height="3" fill="#fff"/>
<rect x="418" y="71.5" width="6" height="2" fill="#a8d040"/>
<path d="M419,57.5Q423,57.5 422.5,61" fill="none" stroke="#c01830" stroke-width="1.1"/>
<path d="M420,61h5l-2.5,3z" fill="#c01830"/>
<!-- cascade -->
<g stroke="#1c2a50" stroke-width="0.9">
<rect x="438.5" y="58.5" width="9" height="6.5" fill="#fff"/><rect x="438.5" y="58.5" width="9" height="1.8" fill="#3a6ad8"/>
<rect x="441.5" y="62" width="9" height="7" fill="#fff"/><rect x="441.5" y="62" width="9" height="1.8" fill="#3a6ad8"/>
<rect x="444.5" y="66" width="9" height="7.5" fill="#f0f4fc"/><rect x="444.5" y="66" width="9" height="1.8" fill="#3a6ad8"/>
</g>
<!-- tile -->
<g stroke="#1c3a80" stroke-width="0.9">
<rect x="462" y="59" width="8.5" height="6.5" fill="#3a6ad8"/><rect x="471" y="59" width="8.5" height="6.5" fill="#3a6ad8"/>
<rect x="462" y="66" width="8.5" height="6.5" fill="#3a6ad8"/><rect x="471" y="66" width="8.5" height="6.5" fill="#3a6ad8"/>
</g>
<g fill="#f4f8ff"><rect x="463" y="61" width="6.5" height="3"/><rect x="472" y="61" width="6.5" height="3"/><rect x="463" y="68" width="6.5" height="3"/><rect x="472" y="68" width="6.5" height="3"/></g>
<!-- help -->
<circle cx="500" cy="66.2" r="7.6" fill="url(#bluebtn)" stroke="#2a4a88" stroke-width="0.8"/>
<text x="500" y="70.5" font-family="Liberation Sans,sans-serif" font-size="11" font-weight="bold" text-anchor="middle" fill="#fff">?</text>
<!-- exit -->
<rect x="522.5" y="59.5" width="9" height="13" fill="#4a7ad0" stroke="#222"/>
<path d="M523,60l5,1.5v11l-5,-0.5z" fill="#d8d8d8" stroke="#888" stroke-width="0.6"/>
<path d="M517,65h3.5v-2.5l5,4l-5,4v-2.5h-3.5z" fill="#e01828" stroke="#a00818" stroke-width="0.6"/>
<!-- toolbar2 -->
<g fill="#e6e6e6"><rect x="190" y="81" width="1" height="21"/><rect x="368" y="81" width="1" height="21"/><rect x="546" y="81" width="2" height="21"/></g>
<g id="ent">
<rect x="173.5" y="83" width="15" height="15.5" rx="3.5" fill="#eeeadb" stroke="#d6cfae"/>
<path d="M184.5,87v4.5h-6.5" fill="none" stroke="#6a6a3a" stroke-width="1.6"/>
<path d="M175.5,91.5l3.2,-2.8v5.6z" fill="#6a6a3a"/>
</g>
<use href="#ent" x="178"/>
<use href="#ent" x="356"/>
<use href="#ent" x="534"/>
<!-- field1 icon -->
<rect x="16" y="91" width="14" height="7" fill="#eef4fc"/>
<path d="M15.5,98V91.5h14.5V98" fill="none" stroke="#3c5070" stroke-width="1.1"/>
<path d="M22.5,83.5v5M20.3,86l2.2,2.5l2.2,-2.5" fill="none" stroke="#e01010" stroke-width="1.3"/>
<path d="M20,89.5h1M22,89.5h1M24,89.5h1" stroke="#2020b0" stroke-width="1"/>
<!-- field2 icon (t) -->
<rect x="194" y="83" width="14" height="8" fill="#eef4fc"/>
<path d="M193.5,83v8.5h15" fill="none" stroke="#3c5070" stroke-width="1.1"/>
<path d="M198,93.5h1M200,93.5h1M202,93.5h1" stroke="#2020b0" stroke-width="1"/>
<path d="M206.5,99v-6M204.3,95l2.2,-2.5l2.2,2.5" fill="none" stroke="#e01010" stroke-width="1.3"/>
<!-- field3 icon (x) -->
<rect x="380" y="86" width="7" height="10" fill="#eef4fc"/>
<path d="M379.5,85v11.5h7.5" fill="none" stroke="#3c5070" stroke-width="1.1"/>
<path d="M371,86.5h7M375.5,84.5l2.5,2l-2.5,2" fill="none" stroke="#e01010" stroke-width="1.3"/>
<path d="M372,90.5h1M374,90.5h1M376,90.5h1" stroke="#2020b0" stroke-width="1"/>
<!-- field4 icon -->
<rect x="549" y="85" width="7" height="11" fill="#eef4fc"/>
<path d="M549,96.5h7.5V85" fill="none" stroke="#3c5070" stroke-width="1.1"/>
<path d="M565,86.5h-7M559.5,84.5l-2.5,2l2.5,2" fill="none" stroke="#e01010" stroke-width="1.3"/>
<path d="M559,90.5h1M561,90.5h1M563,90.5h1" stroke="#2020b0" stroke-width="1"/>
<!-- combo -->
<rect x="727" y="83" width="1" height="17" fill="#9a9a9a"/>
<rect x="733.5" y="82.5" width="69" height="18" rx="2" fill="#fff" stroke="#8c8c8c"/>
<path d="M738,91.5h45" stroke="#555" stroke-width="1"/>
<path d="M790,89l4,4l4,-4" fill="none" stroke="#444" stroke-width="1.1"/>
<rect x="805" y="83" width="1" height="17" fill="#9a9a9a"/>
<rect x="807" y="83" width="1" height="17" fill="#9a9a9a"/>
<rect x="813" y="83" width="1" height="17" fill="#9a9a9a"/>
<!-- slider -->
<rect x="818.5" y="85.5" width="65" height="14" fill="#e6e8e9" stroke="#d8dada"/>
<rect x="847" y="83" width="8" height="19" fill="#0078d7"/>
<!-- red box -->
<rect x="810.5" y="74.5" width="81" height="36" fill="none" stroke="#ff0000" stroke-width="3"/>
<text x="212.5" y="95" font-family="Liberation Sans,sans-serif" font-size="11" fill="#000">t</text>
<text x="390.5" y="94.8" font-family="Liberation Sans,sans-serif" font-size="10.5" fill="#000">x</text>
</svg>

</div>
<svg class="a" style="left:0;top:0" width="941" height="627">
<path fill="#fff" fill-rule="evenodd" d="M0,0H941V627H0Z M8,0H933A8,8 0 0 1 941,8V619A8,8 0 0 1 933,627H8A8,8 0 0 1 0,619V8A8,8 0 0 1 8,0Z"/>
<rect x="0.5" y="0.5" width="940" height="626" rx="8" ry="8" fill="none" stroke="#0063b1" stroke-width="1"/>
</svg>
</body></html>
